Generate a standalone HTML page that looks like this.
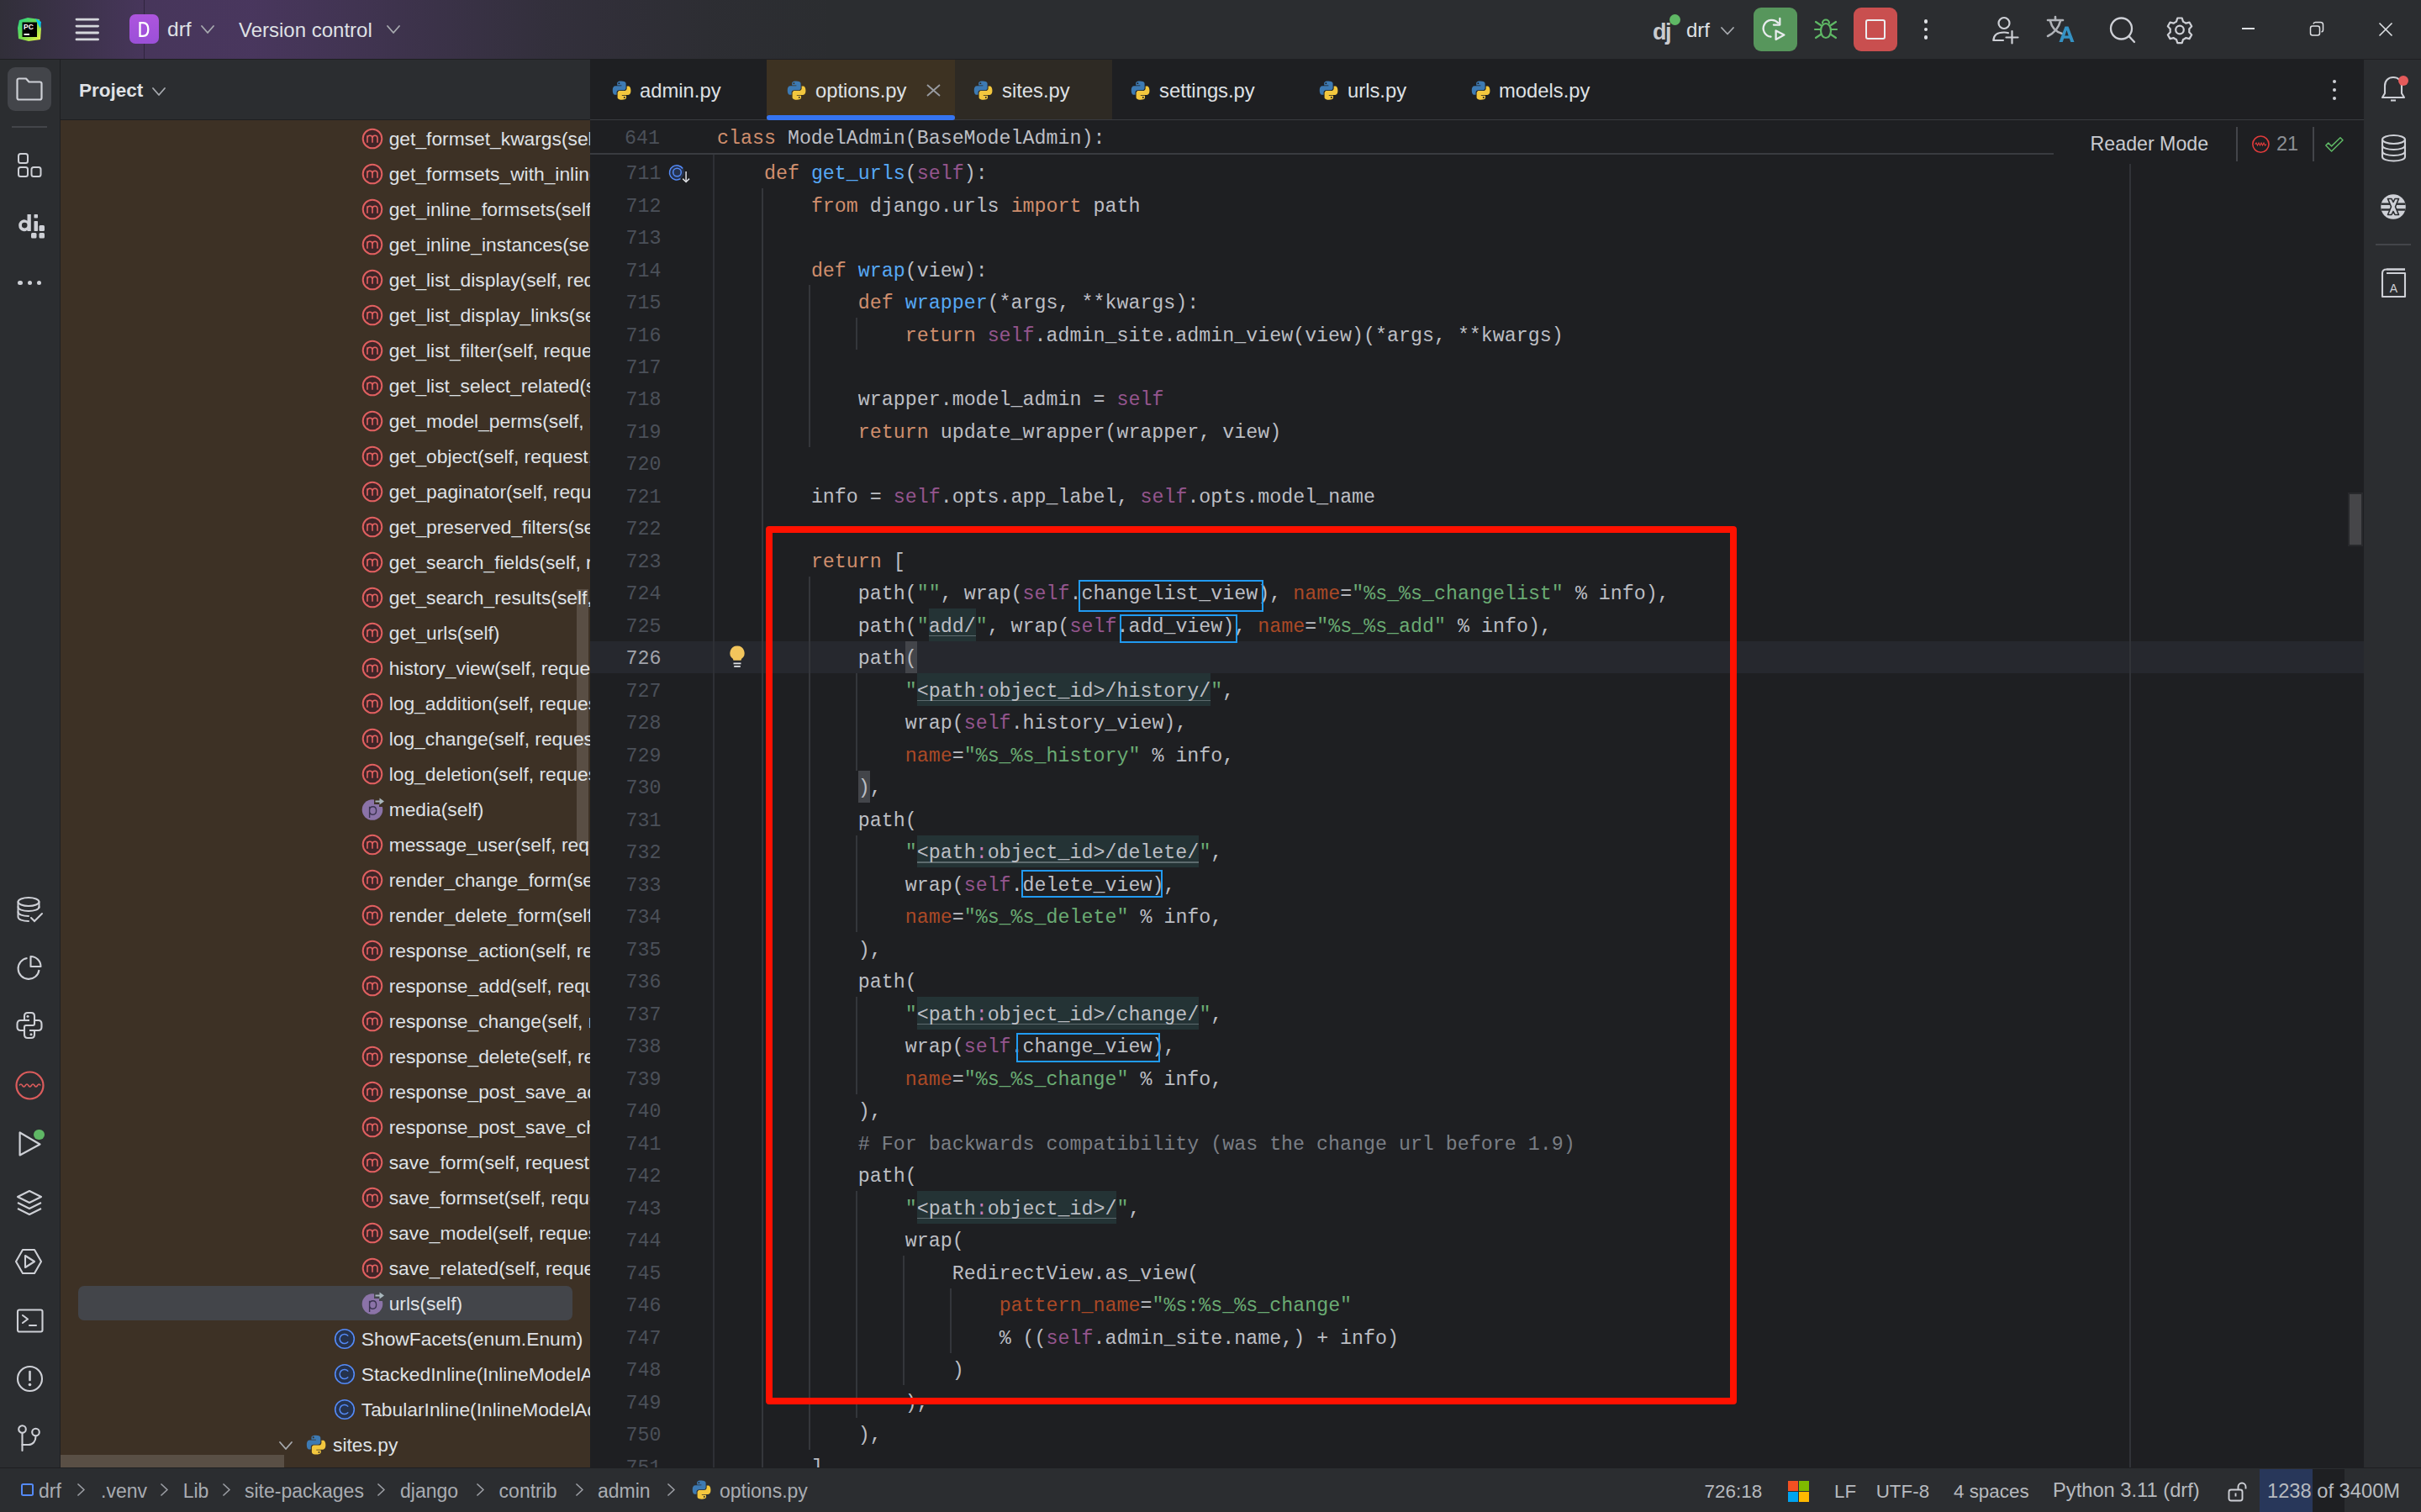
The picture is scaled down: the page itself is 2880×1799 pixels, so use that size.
<!DOCTYPE html><html><head><meta charset="utf-8"><style>html,body{margin:0;padding:0;width:2880px;height:1799px;overflow:hidden;background:#1e1f22;}svg{overflow:visible}</style></head><body><div style="position:absolute;left:0;top:0;width:2880px;height:70px;background:#2b2d30;"></div>
<div style="position:absolute;left:0;top:0;width:1100px;height:70px;background:linear-gradient(90deg, rgba(128,72,178,0.07) 0px, rgba(128,72,178,0.22) 100px, rgba(128,72,178,0.33) 171px, rgba(128,72,178,0.35) 300px, rgba(128,72,178,0.24) 450px, rgba(128,72,178,0.09) 650px, rgba(128,72,178,0.02) 850px, rgba(128,72,178,0) 1000px);"></div>
<div style="position:absolute;left:171px;top:0px;width:1px;height:70px;background:rgba(30,24,40,0.55);"></div>
<div style="position:absolute;left:0px;top:70px;width:2880px;height:1px;background:#1e1f22;"></div>
<div style="position:absolute;left:0px;top:71px;width:71px;height:1676px;background:#2b2d30;"></div>
<div style="position:absolute;left:71px;top:71px;width:1px;height:1676px;background:#1e1f22;"></div>
<div style="position:absolute;left:72px;top:71px;width:630px;height:71px;background:#2b2d30;"></div>
<div style="position:absolute;left:72px;top:142px;width:630px;height:1px;background:#1e1f22;"></div>
<div style="position:absolute;left:72px;top:143px;width:630px;height:1604px;background:#3d3125;"></div>
<div style="position:absolute;left:702px;top:71px;width:2110px;height:1676px;background:#1e1f22;"></div>
<div style="position:absolute;left:2812px;top:71px;width:68px;height:1676px;background:#2b2d30;"></div>
<div style="position:absolute;left:2811px;top:71px;width:1px;height:1676px;background:#1e1f22;"></div>
<div style="position:absolute;left:702px;top:142px;width:2110px;height:2px;background:#393b40;"></div>
<div style="position:absolute;left:702px;top:762.85px;width:2110px;height:38.49px;background:#26282e;"></div>
<div style="position:absolute;left:2533px;top:183px;width:1.5px;height:1563px;background:#313338;"></div>
<div style="position:absolute;left:848px;top:183px;width:2px;height:1563px;background:#2e3035;"></div>
<div style="position:absolute;left:906px;top:223.99px;width:1.5px;height:1539.6000000000001px;background:#34363b;"></div>
<div style="position:absolute;left:962px;top:339.46000000000004px;width:1.5px;height:192.45000000000002px;background:#34363b;"></div>
<div style="position:absolute;left:962px;top:685.87px;width:1.5px;height:1039.23px;background:#34363b;"></div>
<div style="position:absolute;left:1018px;top:377.95000000000005px;width:1.5px;height:38.49px;background:#34363b;"></div>
<div style="position:absolute;left:1018px;top:801.34px;width:1.5px;height:115.47px;background:#34363b;"></div>
<div style="position:absolute;left:1018px;top:993.7900000000001px;width:1.5px;height:115.47px;background:#34363b;"></div>
<div style="position:absolute;left:1018px;top:1186.24px;width:1.5px;height:115.47px;background:#34363b;"></div>
<div style="position:absolute;left:1018px;top:1417.18px;width:1.5px;height:269.43px;background:#34363b;"></div>
<div style="position:absolute;left:1074px;top:1494.16px;width:1.5px;height:153.96px;background:#34363b;"></div>
<div style="position:absolute;left:1130px;top:1532.65px;width:1.5px;height:76.98px;background:#34363b;"></div>
<div style="position:absolute;left:744.545px;top:196.05px;font-family:'Liberation Mono', monospace;font-size:23.3px;line-height:23.3px;color:#4b5059;white-space:pre;">711</div>
<div style="position:absolute;left:744.545px;top:234.54px;font-family:'Liberation Mono', monospace;font-size:23.3px;line-height:23.3px;color:#4b5059;white-space:pre;">712</div>
<div style="position:absolute;left:744.545px;top:273.03px;font-family:'Liberation Mono', monospace;font-size:23.3px;line-height:23.3px;color:#4b5059;white-space:pre;">713</div>
<div style="position:absolute;left:744.545px;top:311.52px;font-family:'Liberation Mono', monospace;font-size:23.3px;line-height:23.3px;color:#4b5059;white-space:pre;">714</div>
<div style="position:absolute;left:744.545px;top:350.01px;font-family:'Liberation Mono', monospace;font-size:23.3px;line-height:23.3px;color:#4b5059;white-space:pre;">715</div>
<div style="position:absolute;left:744.545px;top:388.50px;font-family:'Liberation Mono', monospace;font-size:23.3px;line-height:23.3px;color:#4b5059;white-space:pre;">716</div>
<div style="position:absolute;left:744.545px;top:426.99px;font-family:'Liberation Mono', monospace;font-size:23.3px;line-height:23.3px;color:#4b5059;white-space:pre;">717</div>
<div style="position:absolute;left:744.545px;top:465.48px;font-family:'Liberation Mono', monospace;font-size:23.3px;line-height:23.3px;color:#4b5059;white-space:pre;">718</div>
<div style="position:absolute;left:744.545px;top:503.97px;font-family:'Liberation Mono', monospace;font-size:23.3px;line-height:23.3px;color:#4b5059;white-space:pre;">719</div>
<div style="position:absolute;left:744.545px;top:542.46px;font-family:'Liberation Mono', monospace;font-size:23.3px;line-height:23.3px;color:#4b5059;white-space:pre;">720</div>
<div style="position:absolute;left:744.545px;top:580.95px;font-family:'Liberation Mono', monospace;font-size:23.3px;line-height:23.3px;color:#4b5059;white-space:pre;">721</div>
<div style="position:absolute;left:744.545px;top:619.44px;font-family:'Liberation Mono', monospace;font-size:23.3px;line-height:23.3px;color:#4b5059;white-space:pre;">722</div>
<div style="position:absolute;left:744.545px;top:657.93px;font-family:'Liberation Mono', monospace;font-size:23.3px;line-height:23.3px;color:#4b5059;white-space:pre;">723</div>
<div style="position:absolute;left:744.545px;top:696.42px;font-family:'Liberation Mono', monospace;font-size:23.3px;line-height:23.3px;color:#4b5059;white-space:pre;">724</div>
<div style="position:absolute;left:744.545px;top:734.91px;font-family:'Liberation Mono', monospace;font-size:23.3px;line-height:23.3px;color:#4b5059;white-space:pre;">725</div>
<div style="position:absolute;left:744.545px;top:773.40px;font-family:'Liberation Mono', monospace;font-size:23.3px;line-height:23.3px;color:#a1a3ab;white-space:pre;">726</div>
<div style="position:absolute;left:744.545px;top:811.89px;font-family:'Liberation Mono', monospace;font-size:23.3px;line-height:23.3px;color:#4b5059;white-space:pre;">727</div>
<div style="position:absolute;left:744.545px;top:850.38px;font-family:'Liberation Mono', monospace;font-size:23.3px;line-height:23.3px;color:#4b5059;white-space:pre;">728</div>
<div style="position:absolute;left:744.545px;top:888.87px;font-family:'Liberation Mono', monospace;font-size:23.3px;line-height:23.3px;color:#4b5059;white-space:pre;">729</div>
<div style="position:absolute;left:744.545px;top:927.36px;font-family:'Liberation Mono', monospace;font-size:23.3px;line-height:23.3px;color:#4b5059;white-space:pre;">730</div>
<div style="position:absolute;left:744.545px;top:965.85px;font-family:'Liberation Mono', monospace;font-size:23.3px;line-height:23.3px;color:#4b5059;white-space:pre;">731</div>
<div style="position:absolute;left:744.545px;top:1004.34px;font-family:'Liberation Mono', monospace;font-size:23.3px;line-height:23.3px;color:#4b5059;white-space:pre;">732</div>
<div style="position:absolute;left:744.545px;top:1042.83px;font-family:'Liberation Mono', monospace;font-size:23.3px;line-height:23.3px;color:#4b5059;white-space:pre;">733</div>
<div style="position:absolute;left:744.545px;top:1081.32px;font-family:'Liberation Mono', monospace;font-size:23.3px;line-height:23.3px;color:#4b5059;white-space:pre;">734</div>
<div style="position:absolute;left:744.545px;top:1119.81px;font-family:'Liberation Mono', monospace;font-size:23.3px;line-height:23.3px;color:#4b5059;white-space:pre;">735</div>
<div style="position:absolute;left:744.545px;top:1158.30px;font-family:'Liberation Mono', monospace;font-size:23.3px;line-height:23.3px;color:#4b5059;white-space:pre;">736</div>
<div style="position:absolute;left:744.545px;top:1196.79px;font-family:'Liberation Mono', monospace;font-size:23.3px;line-height:23.3px;color:#4b5059;white-space:pre;">737</div>
<div style="position:absolute;left:744.545px;top:1235.28px;font-family:'Liberation Mono', monospace;font-size:23.3px;line-height:23.3px;color:#4b5059;white-space:pre;">738</div>
<div style="position:absolute;left:744.545px;top:1273.77px;font-family:'Liberation Mono', monospace;font-size:23.3px;line-height:23.3px;color:#4b5059;white-space:pre;">739</div>
<div style="position:absolute;left:744.545px;top:1312.26px;font-family:'Liberation Mono', monospace;font-size:23.3px;line-height:23.3px;color:#4b5059;white-space:pre;">740</div>
<div style="position:absolute;left:744.545px;top:1350.75px;font-family:'Liberation Mono', monospace;font-size:23.3px;line-height:23.3px;color:#4b5059;white-space:pre;">741</div>
<div style="position:absolute;left:744.545px;top:1389.24px;font-family:'Liberation Mono', monospace;font-size:23.3px;line-height:23.3px;color:#4b5059;white-space:pre;">742</div>
<div style="position:absolute;left:744.545px;top:1427.73px;font-family:'Liberation Mono', monospace;font-size:23.3px;line-height:23.3px;color:#4b5059;white-space:pre;">743</div>
<div style="position:absolute;left:744.545px;top:1466.22px;font-family:'Liberation Mono', monospace;font-size:23.3px;line-height:23.3px;color:#4b5059;white-space:pre;">744</div>
<div style="position:absolute;left:744.545px;top:1504.71px;font-family:'Liberation Mono', monospace;font-size:23.3px;line-height:23.3px;color:#4b5059;white-space:pre;">745</div>
<div style="position:absolute;left:744.545px;top:1543.20px;font-family:'Liberation Mono', monospace;font-size:23.3px;line-height:23.3px;color:#4b5059;white-space:pre;">746</div>
<div style="position:absolute;left:744.545px;top:1581.69px;font-family:'Liberation Mono', monospace;font-size:23.3px;line-height:23.3px;color:#4b5059;white-space:pre;">747</div>
<div style="position:absolute;left:744.545px;top:1620.18px;font-family:'Liberation Mono', monospace;font-size:23.3px;line-height:23.3px;color:#4b5059;white-space:pre;">748</div>
<div style="position:absolute;left:744.545px;top:1658.67px;font-family:'Liberation Mono', monospace;font-size:23.3px;line-height:23.3px;color:#4b5059;white-space:pre;">749</div>
<div style="position:absolute;left:744.545px;top:1697.16px;font-family:'Liberation Mono', monospace;font-size:23.3px;line-height:23.3px;color:#4b5059;white-space:pre;">750</div>
<div style="position:absolute;left:744.545px;top:1735.65px;font-family:'Liberation Mono', monospace;font-size:23.3px;line-height:23.3px;color:#4b5059;white-space:pre;">751</div>
<div style="position:absolute;left:908.94px;top:196.05px;font-family:'Liberation Mono', monospace;font-size:23.3px;line-height:23.3px;color:#cf8e6d;white-space:pre;">def</div>
<div style="position:absolute;left:950.8950000000001px;top:196.05px;font-family:'Liberation Mono', monospace;font-size:23.3px;line-height:23.3px;color:#bcbec4;white-space:pre;"> </div>
<div style="position:absolute;left:964.8800000000001px;top:196.05px;font-family:'Liberation Mono', monospace;font-size:23.3px;line-height:23.3px;color:#56a8f5;white-space:pre;">get_urls</div>
<div style="position:absolute;left:1076.7600000000002px;top:196.05px;font-family:'Liberation Mono', monospace;font-size:23.3px;line-height:23.3px;color:#bcbec4;white-space:pre;">(</div>
<div style="position:absolute;left:1090.7450000000001px;top:196.05px;font-family:'Liberation Mono', monospace;font-size:23.3px;line-height:23.3px;color:#94558d;white-space:pre;">self</div>
<div style="position:absolute;left:1146.6850000000002px;top:196.05px;font-family:'Liberation Mono', monospace;font-size:23.3px;line-height:23.3px;color:#bcbec4;white-space:pre;">):</div>
<div style="position:absolute;left:964.88px;top:234.54px;font-family:'Liberation Mono', monospace;font-size:23.3px;line-height:23.3px;color:#cf8e6d;white-space:pre;">from</div>
<div style="position:absolute;left:1020.8199999999999px;top:234.54px;font-family:'Liberation Mono', monospace;font-size:23.3px;line-height:23.3px;color:#bcbec4;white-space:pre;"> django.urls </div>
<div style="position:absolute;left:1202.625px;top:234.54px;font-family:'Liberation Mono', monospace;font-size:23.3px;line-height:23.3px;color:#cf8e6d;white-space:pre;">import</div>
<div style="position:absolute;left:1286.535px;top:234.54px;font-family:'Liberation Mono', monospace;font-size:23.3px;line-height:23.3px;color:#bcbec4;white-space:pre;"> path</div>
<div style="position:absolute;left:964.88px;top:311.52px;font-family:'Liberation Mono', monospace;font-size:23.3px;line-height:23.3px;color:#cf8e6d;white-space:pre;">def</div>
<div style="position:absolute;left:1006.835px;top:311.52px;font-family:'Liberation Mono', monospace;font-size:23.3px;line-height:23.3px;color:#bcbec4;white-space:pre;"> </div>
<div style="position:absolute;left:1020.82px;top:311.52px;font-family:'Liberation Mono', monospace;font-size:23.3px;line-height:23.3px;color:#56a8f5;white-space:pre;">wrap</div>
<div style="position:absolute;left:1076.76px;top:311.52px;font-family:'Liberation Mono', monospace;font-size:23.3px;line-height:23.3px;color:#bcbec4;white-space:pre;">(view):</div>
<div style="position:absolute;left:1020.8199999999999px;top:350.01px;font-family:'Liberation Mono', monospace;font-size:23.3px;line-height:23.3px;color:#cf8e6d;white-space:pre;">def</div>
<div style="position:absolute;left:1062.7749999999999px;top:350.01px;font-family:'Liberation Mono', monospace;font-size:23.3px;line-height:23.3px;color:#bcbec4;white-space:pre;"> </div>
<div style="position:absolute;left:1076.7599999999998px;top:350.01px;font-family:'Liberation Mono', monospace;font-size:23.3px;line-height:23.3px;color:#56a8f5;white-space:pre;">wrapper</div>
<div style="position:absolute;left:1174.6549999999997px;top:350.01px;font-family:'Liberation Mono', monospace;font-size:23.3px;line-height:23.3px;color:#bcbec4;white-space:pre;">(*args, **kwargs):</div>
<div style="position:absolute;left:1076.76px;top:388.50px;font-family:'Liberation Mono', monospace;font-size:23.3px;line-height:23.3px;color:#cf8e6d;white-space:pre;">return</div>
<div style="position:absolute;left:1160.67px;top:388.50px;font-family:'Liberation Mono', monospace;font-size:23.3px;line-height:23.3px;color:#bcbec4;white-space:pre;"> </div>
<div style="position:absolute;left:1174.655px;top:388.50px;font-family:'Liberation Mono', monospace;font-size:23.3px;line-height:23.3px;color:#94558d;white-space:pre;">self</div>
<div style="position:absolute;left:1230.595px;top:388.50px;font-family:'Liberation Mono', monospace;font-size:23.3px;line-height:23.3px;color:#bcbec4;white-space:pre;">.admin_site.admin_view(view)(*args, **kwargs)</div>
<div style="position:absolute;left:1020.8199999999999px;top:465.48px;font-family:'Liberation Mono', monospace;font-size:23.3px;line-height:23.3px;color:#bcbec4;white-space:pre;">wrapper.model_admin = </div>
<div style="position:absolute;left:1328.4899999999998px;top:465.48px;font-family:'Liberation Mono', monospace;font-size:23.3px;line-height:23.3px;color:#94558d;white-space:pre;">self</div>
<div style="position:absolute;left:1020.8199999999999px;top:503.97px;font-family:'Liberation Mono', monospace;font-size:23.3px;line-height:23.3px;color:#cf8e6d;white-space:pre;">return</div>
<div style="position:absolute;left:1104.73px;top:503.97px;font-family:'Liberation Mono', monospace;font-size:23.3px;line-height:23.3px;color:#bcbec4;white-space:pre;"> update_wrapper(wrapper, view)</div>
<div style="position:absolute;left:964.88px;top:580.95px;font-family:'Liberation Mono', monospace;font-size:23.3px;line-height:23.3px;color:#bcbec4;white-space:pre;">info = </div>
<div style="position:absolute;left:1062.775px;top:580.95px;font-family:'Liberation Mono', monospace;font-size:23.3px;line-height:23.3px;color:#94558d;white-space:pre;">self</div>
<div style="position:absolute;left:1118.7150000000001px;top:580.95px;font-family:'Liberation Mono', monospace;font-size:23.3px;line-height:23.3px;color:#bcbec4;white-space:pre;">.opts.app_label, </div>
<div style="position:absolute;left:1356.46px;top:580.95px;font-family:'Liberation Mono', monospace;font-size:23.3px;line-height:23.3px;color:#94558d;white-space:pre;">self</div>
<div style="position:absolute;left:1412.4px;top:580.95px;font-family:'Liberation Mono', monospace;font-size:23.3px;line-height:23.3px;color:#bcbec4;white-space:pre;">.opts.model_name</div>
<div style="position:absolute;left:964.88px;top:657.93px;font-family:'Liberation Mono', monospace;font-size:23.3px;line-height:23.3px;color:#cf8e6d;white-space:pre;">return</div>
<div style="position:absolute;left:1048.79px;top:657.93px;font-family:'Liberation Mono', monospace;font-size:23.3px;line-height:23.3px;color:#bcbec4;white-space:pre;"> [</div>
<div style="position:absolute;left:1020.8199999999999px;top:696.42px;font-family:'Liberation Mono', monospace;font-size:23.3px;line-height:23.3px;color:#bcbec4;white-space:pre;">path(</div>
<div style="position:absolute;left:1090.745px;top:696.42px;font-family:'Liberation Mono', monospace;font-size:23.3px;line-height:23.3px;color:#6aab73;white-space:pre;">&quot;&quot;</div>
<div style="position:absolute;left:1118.715px;top:696.42px;font-family:'Liberation Mono', monospace;font-size:23.3px;line-height:23.3px;color:#bcbec4;white-space:pre;">, wrap(</div>
<div style="position:absolute;left:1216.61px;top:696.42px;font-family:'Liberation Mono', monospace;font-size:23.3px;line-height:23.3px;color:#94558d;white-space:pre;">self</div>
<div style="position:absolute;left:1272.55px;top:696.42px;font-family:'Liberation Mono', monospace;font-size:23.3px;line-height:23.3px;color:#bcbec4;white-space:pre;">.changelist_view), </div>
<div style="position:absolute;left:1538.2649999999999px;top:696.42px;font-family:'Liberation Mono', monospace;font-size:23.3px;line-height:23.3px;color:#aa4926;white-space:pre;">name</div>
<div style="position:absolute;left:1594.205px;top:696.42px;font-family:'Liberation Mono', monospace;font-size:23.3px;line-height:23.3px;color:#bcbec4;white-space:pre;">=</div>
<div style="position:absolute;left:1608.1899999999998px;top:696.42px;font-family:'Liberation Mono', monospace;font-size:23.3px;line-height:23.3px;color:#6aab73;white-space:pre;">&quot;%s_%s_changelist&quot;</div>
<div style="position:absolute;left:1859.9199999999998px;top:696.42px;font-family:'Liberation Mono', monospace;font-size:23.3px;line-height:23.3px;color:#bcbec4;white-space:pre;"> % info),</div>
<div style="position:absolute;left:1020.8199999999999px;top:734.91px;font-family:'Liberation Mono', monospace;font-size:23.3px;line-height:23.3px;color:#bcbec4;white-space:pre;">path(</div>
<div style="position:absolute;left:1090.745px;top:734.91px;font-family:'Liberation Mono', monospace;font-size:23.3px;line-height:23.3px;color:#6aab73;white-space:pre;">&quot;</div>
<div style="position:absolute;left:1104.7299999999998px;top:724.36px;width:55.94px;height:38.49px;background:#243335;"></div>
<div style="position:absolute;left:1104.7299999999998px;top:755.76px;width:55.94px;height:1.5px;background:#5d6b6e;"></div>
<div style="position:absolute;left:1104.7299999999998px;top:734.91px;font-family:'Liberation Mono', monospace;font-size:23.3px;line-height:23.3px;color:#bcbec4;white-space:pre;">add/</div>
<div style="position:absolute;left:1160.6699999999998px;top:734.91px;font-family:'Liberation Mono', monospace;font-size:23.3px;line-height:23.3px;color:#6aab73;white-space:pre;">&quot;</div>
<div style="position:absolute;left:1174.6549999999997px;top:734.91px;font-family:'Liberation Mono', monospace;font-size:23.3px;line-height:23.3px;color:#bcbec4;white-space:pre;">, wrap(</div>
<div style="position:absolute;left:1272.5499999999997px;top:734.91px;font-family:'Liberation Mono', monospace;font-size:23.3px;line-height:23.3px;color:#94558d;white-space:pre;">self</div>
<div style="position:absolute;left:1328.4899999999998px;top:734.91px;font-family:'Liberation Mono', monospace;font-size:23.3px;line-height:23.3px;color:#bcbec4;white-space:pre;">.add_view), </div>
<div style="position:absolute;left:1496.3099999999997px;top:734.91px;font-family:'Liberation Mono', monospace;font-size:23.3px;line-height:23.3px;color:#aa4926;white-space:pre;">name</div>
<div style="position:absolute;left:1552.2499999999998px;top:734.91px;font-family:'Liberation Mono', monospace;font-size:23.3px;line-height:23.3px;color:#bcbec4;white-space:pre;">=</div>
<div style="position:absolute;left:1566.2349999999997px;top:734.91px;font-family:'Liberation Mono', monospace;font-size:23.3px;line-height:23.3px;color:#6aab73;white-space:pre;">&quot;%s_%s_add&quot;</div>
<div style="position:absolute;left:1720.0699999999997px;top:734.91px;font-family:'Liberation Mono', monospace;font-size:23.3px;line-height:23.3px;color:#bcbec4;white-space:pre;"> % info),</div>
<div style="position:absolute;left:1020.8199999999999px;top:773.40px;font-family:'Liberation Mono', monospace;font-size:23.3px;line-height:23.3px;color:#bcbec4;white-space:pre;">path</div>
<div style="position:absolute;left:1076.76px;top:762.85px;width:13.985px;height:38.49px;background:#43454a;"></div>
<div style="position:absolute;left:1076.76px;top:773.40px;font-family:'Liberation Mono', monospace;font-size:23.3px;line-height:23.3px;color:#bcbec4;white-space:pre;">(</div>
<div style="position:absolute;left:1076.76px;top:811.89px;font-family:'Liberation Mono', monospace;font-size:23.3px;line-height:23.3px;color:#6aab73;white-space:pre;">&quot;</div>
<div style="position:absolute;left:1090.745px;top:801.34px;width:69.925px;height:38.49px;background:#243335;"></div>
<div style="position:absolute;left:1090.745px;top:832.74px;width:69.925px;height:1.5px;background:#5d6b6e;"></div>
<div style="position:absolute;left:1090.745px;top:811.89px;font-family:'Liberation Mono', monospace;font-size:23.3px;line-height:23.3px;color:#bcbec4;white-space:pre;">&lt;path</div>
<div style="position:absolute;left:1160.6699999999998px;top:801.34px;width:13.985px;height:38.49px;background:#243335;"></div>
<div style="position:absolute;left:1160.6699999999998px;top:832.74px;width:13.985px;height:1.5px;background:#5d6b6e;"></div>
<div style="position:absolute;left:1160.6699999999998px;top:811.89px;font-family:'Liberation Mono', monospace;font-size:23.3px;line-height:23.3px;color:#c77dbb;white-space:pre;">:</div>
<div style="position:absolute;left:1174.6549999999997px;top:801.34px;width:265.715px;height:38.49px;background:#243335;"></div>
<div style="position:absolute;left:1174.6549999999997px;top:832.74px;width:265.715px;height:1.5px;background:#5d6b6e;"></div>
<div style="position:absolute;left:1174.6549999999997px;top:811.89px;font-family:'Liberation Mono', monospace;font-size:23.3px;line-height:23.3px;color:#bcbec4;white-space:pre;">object_id&gt;/history/</div>
<div style="position:absolute;left:1440.3699999999997px;top:811.89px;font-family:'Liberation Mono', monospace;font-size:23.3px;line-height:23.3px;color:#6aab73;white-space:pre;">&quot;</div>
<div style="position:absolute;left:1454.3549999999996px;top:811.89px;font-family:'Liberation Mono', monospace;font-size:23.3px;line-height:23.3px;color:#bcbec4;white-space:pre;">,</div>
<div style="position:absolute;left:1076.76px;top:850.38px;font-family:'Liberation Mono', monospace;font-size:23.3px;line-height:23.3px;color:#bcbec4;white-space:pre;">wrap(</div>
<div style="position:absolute;left:1146.685px;top:850.38px;font-family:'Liberation Mono', monospace;font-size:23.3px;line-height:23.3px;color:#94558d;white-space:pre;">self</div>
<div style="position:absolute;left:1202.625px;top:850.38px;font-family:'Liberation Mono', monospace;font-size:23.3px;line-height:23.3px;color:#bcbec4;white-space:pre;">.history_view),</div>
<div style="position:absolute;left:1076.76px;top:888.87px;font-family:'Liberation Mono', monospace;font-size:23.3px;line-height:23.3px;color:#aa4926;white-space:pre;">name</div>
<div style="position:absolute;left:1132.7px;top:888.87px;font-family:'Liberation Mono', monospace;font-size:23.3px;line-height:23.3px;color:#bcbec4;white-space:pre;">=</div>
<div style="position:absolute;left:1146.685px;top:888.87px;font-family:'Liberation Mono', monospace;font-size:23.3px;line-height:23.3px;color:#6aab73;white-space:pre;">&quot;%s_%s_history&quot;</div>
<div style="position:absolute;left:1356.46px;top:888.87px;font-family:'Liberation Mono', monospace;font-size:23.3px;line-height:23.3px;color:#bcbec4;white-space:pre;"> % info,</div>
<div style="position:absolute;left:1020.8199999999999px;top:916.8100000000001px;width:13.985px;height:38.49px;background:#43454a;"></div>
<div style="position:absolute;left:1020.8199999999999px;top:927.36px;font-family:'Liberation Mono', monospace;font-size:23.3px;line-height:23.3px;color:#bcbec4;white-space:pre;">)</div>
<div style="position:absolute;left:1034.8049999999998px;top:927.36px;font-family:'Liberation Mono', monospace;font-size:23.3px;line-height:23.3px;color:#bcbec4;white-space:pre;">,</div>
<div style="position:absolute;left:1020.8199999999999px;top:965.85px;font-family:'Liberation Mono', monospace;font-size:23.3px;line-height:23.3px;color:#bcbec4;white-space:pre;">path(</div>
<div style="position:absolute;left:1076.76px;top:1004.34px;font-family:'Liberation Mono', monospace;font-size:23.3px;line-height:23.3px;color:#6aab73;white-space:pre;">&quot;</div>
<div style="position:absolute;left:1090.745px;top:993.7900000000001px;width:69.925px;height:38.49px;background:#243335;"></div>
<div style="position:absolute;left:1090.745px;top:1025.19px;width:69.925px;height:1.5px;background:#5d6b6e;"></div>
<div style="position:absolute;left:1090.745px;top:1004.34px;font-family:'Liberation Mono', monospace;font-size:23.3px;line-height:23.3px;color:#bcbec4;white-space:pre;">&lt;path</div>
<div style="position:absolute;left:1160.6699999999998px;top:993.7900000000001px;width:13.985px;height:38.49px;background:#243335;"></div>
<div style="position:absolute;left:1160.6699999999998px;top:1025.19px;width:13.985px;height:1.5px;background:#5d6b6e;"></div>
<div style="position:absolute;left:1160.6699999999998px;top:1004.34px;font-family:'Liberation Mono', monospace;font-size:23.3px;line-height:23.3px;color:#c77dbb;white-space:pre;">:</div>
<div style="position:absolute;left:1174.6549999999997px;top:993.7900000000001px;width:251.73px;height:38.49px;background:#243335;"></div>
<div style="position:absolute;left:1174.6549999999997px;top:1025.19px;width:251.73px;height:1.5px;background:#5d6b6e;"></div>
<div style="position:absolute;left:1174.6549999999997px;top:1004.34px;font-family:'Liberation Mono', monospace;font-size:23.3px;line-height:23.3px;color:#bcbec4;white-space:pre;">object_id&gt;/delete/</div>
<div style="position:absolute;left:1426.3849999999998px;top:1004.34px;font-family:'Liberation Mono', monospace;font-size:23.3px;line-height:23.3px;color:#6aab73;white-space:pre;">&quot;</div>
<div style="position:absolute;left:1440.3699999999997px;top:1004.34px;font-family:'Liberation Mono', monospace;font-size:23.3px;line-height:23.3px;color:#bcbec4;white-space:pre;">,</div>
<div style="position:absolute;left:1076.76px;top:1042.83px;font-family:'Liberation Mono', monospace;font-size:23.3px;line-height:23.3px;color:#bcbec4;white-space:pre;">wrap(</div>
<div style="position:absolute;left:1146.685px;top:1042.83px;font-family:'Liberation Mono', monospace;font-size:23.3px;line-height:23.3px;color:#94558d;white-space:pre;">self</div>
<div style="position:absolute;left:1202.625px;top:1042.83px;font-family:'Liberation Mono', monospace;font-size:23.3px;line-height:23.3px;color:#bcbec4;white-space:pre;">.delete_view),</div>
<div style="position:absolute;left:1076.76px;top:1081.32px;font-family:'Liberation Mono', monospace;font-size:23.3px;line-height:23.3px;color:#aa4926;white-space:pre;">name</div>
<div style="position:absolute;left:1132.7px;top:1081.32px;font-family:'Liberation Mono', monospace;font-size:23.3px;line-height:23.3px;color:#bcbec4;white-space:pre;">=</div>
<div style="position:absolute;left:1146.685px;top:1081.32px;font-family:'Liberation Mono', monospace;font-size:23.3px;line-height:23.3px;color:#6aab73;white-space:pre;">&quot;%s_%s_delete&quot;</div>
<div style="position:absolute;left:1342.475px;top:1081.32px;font-family:'Liberation Mono', monospace;font-size:23.3px;line-height:23.3px;color:#bcbec4;white-space:pre;"> % info,</div>
<div style="position:absolute;left:1020.8199999999999px;top:1119.81px;font-family:'Liberation Mono', monospace;font-size:23.3px;line-height:23.3px;color:#bcbec4;white-space:pre;">),</div>
<div style="position:absolute;left:1020.8199999999999px;top:1158.30px;font-family:'Liberation Mono', monospace;font-size:23.3px;line-height:23.3px;color:#bcbec4;white-space:pre;">path(</div>
<div style="position:absolute;left:1076.76px;top:1196.79px;font-family:'Liberation Mono', monospace;font-size:23.3px;line-height:23.3px;color:#6aab73;white-space:pre;">&quot;</div>
<div style="position:absolute;left:1090.745px;top:1186.24px;width:69.925px;height:38.49px;background:#243335;"></div>
<div style="position:absolute;left:1090.745px;top:1217.64px;width:69.925px;height:1.5px;background:#5d6b6e;"></div>
<div style="position:absolute;left:1090.745px;top:1196.79px;font-family:'Liberation Mono', monospace;font-size:23.3px;line-height:23.3px;color:#bcbec4;white-space:pre;">&lt;path</div>
<div style="position:absolute;left:1160.6699999999998px;top:1186.24px;width:13.985px;height:38.49px;background:#243335;"></div>
<div style="position:absolute;left:1160.6699999999998px;top:1217.64px;width:13.985px;height:1.5px;background:#5d6b6e;"></div>
<div style="position:absolute;left:1160.6699999999998px;top:1196.79px;font-family:'Liberation Mono', monospace;font-size:23.3px;line-height:23.3px;color:#c77dbb;white-space:pre;">:</div>
<div style="position:absolute;left:1174.6549999999997px;top:1186.24px;width:251.73px;height:38.49px;background:#243335;"></div>
<div style="position:absolute;left:1174.6549999999997px;top:1217.64px;width:251.73px;height:1.5px;background:#5d6b6e;"></div>
<div style="position:absolute;left:1174.6549999999997px;top:1196.79px;font-family:'Liberation Mono', monospace;font-size:23.3px;line-height:23.3px;color:#bcbec4;white-space:pre;">object_id&gt;/change/</div>
<div style="position:absolute;left:1426.3849999999998px;top:1196.79px;font-family:'Liberation Mono', monospace;font-size:23.3px;line-height:23.3px;color:#6aab73;white-space:pre;">&quot;</div>
<div style="position:absolute;left:1440.3699999999997px;top:1196.79px;font-family:'Liberation Mono', monospace;font-size:23.3px;line-height:23.3px;color:#bcbec4;white-space:pre;">,</div>
<div style="position:absolute;left:1076.76px;top:1235.28px;font-family:'Liberation Mono', monospace;font-size:23.3px;line-height:23.3px;color:#bcbec4;white-space:pre;">wrap(</div>
<div style="position:absolute;left:1146.685px;top:1235.28px;font-family:'Liberation Mono', monospace;font-size:23.3px;line-height:23.3px;color:#94558d;white-space:pre;">self</div>
<div style="position:absolute;left:1202.625px;top:1235.28px;font-family:'Liberation Mono', monospace;font-size:23.3px;line-height:23.3px;color:#bcbec4;white-space:pre;">.change_view),</div>
<div style="position:absolute;left:1076.76px;top:1273.77px;font-family:'Liberation Mono', monospace;font-size:23.3px;line-height:23.3px;color:#aa4926;white-space:pre;">name</div>
<div style="position:absolute;left:1132.7px;top:1273.77px;font-family:'Liberation Mono', monospace;font-size:23.3px;line-height:23.3px;color:#bcbec4;white-space:pre;">=</div>
<div style="position:absolute;left:1146.685px;top:1273.77px;font-family:'Liberation Mono', monospace;font-size:23.3px;line-height:23.3px;color:#6aab73;white-space:pre;">&quot;%s_%s_change&quot;</div>
<div style="position:absolute;left:1342.475px;top:1273.77px;font-family:'Liberation Mono', monospace;font-size:23.3px;line-height:23.3px;color:#bcbec4;white-space:pre;"> % info,</div>
<div style="position:absolute;left:1020.8199999999999px;top:1312.26px;font-family:'Liberation Mono', monospace;font-size:23.3px;line-height:23.3px;color:#bcbec4;white-space:pre;">),</div>
<div style="position:absolute;left:1020.8199999999999px;top:1350.75px;font-family:'Liberation Mono', monospace;font-size:23.3px;line-height:23.3px;color:#7a7e85;white-space:pre;"># For backwards compatibility (was the change url before 1.9)</div>
<div style="position:absolute;left:1020.8199999999999px;top:1389.24px;font-family:'Liberation Mono', monospace;font-size:23.3px;line-height:23.3px;color:#bcbec4;white-space:pre;">path(</div>
<div style="position:absolute;left:1076.76px;top:1427.73px;font-family:'Liberation Mono', monospace;font-size:23.3px;line-height:23.3px;color:#6aab73;white-space:pre;">&quot;</div>
<div style="position:absolute;left:1090.745px;top:1417.18px;width:69.925px;height:38.49px;background:#243335;"></div>
<div style="position:absolute;left:1090.745px;top:1448.5800000000002px;width:69.925px;height:1.5px;background:#5d6b6e;"></div>
<div style="position:absolute;left:1090.745px;top:1427.73px;font-family:'Liberation Mono', monospace;font-size:23.3px;line-height:23.3px;color:#bcbec4;white-space:pre;">&lt;path</div>
<div style="position:absolute;left:1160.6699999999998px;top:1417.18px;width:13.985px;height:38.49px;background:#243335;"></div>
<div style="position:absolute;left:1160.6699999999998px;top:1448.5800000000002px;width:13.985px;height:1.5px;background:#5d6b6e;"></div>
<div style="position:absolute;left:1160.6699999999998px;top:1427.73px;font-family:'Liberation Mono', monospace;font-size:23.3px;line-height:23.3px;color:#c77dbb;white-space:pre;">:</div>
<div style="position:absolute;left:1174.6549999999997px;top:1417.18px;width:153.83499999999998px;height:38.49px;background:#243335;"></div>
<div style="position:absolute;left:1174.6549999999997px;top:1448.5800000000002px;width:153.83499999999998px;height:1.5px;background:#5d6b6e;"></div>
<div style="position:absolute;left:1174.6549999999997px;top:1427.73px;font-family:'Liberation Mono', monospace;font-size:23.3px;line-height:23.3px;color:#bcbec4;white-space:pre;">object_id&gt;/</div>
<div style="position:absolute;left:1328.4899999999998px;top:1427.73px;font-family:'Liberation Mono', monospace;font-size:23.3px;line-height:23.3px;color:#6aab73;white-space:pre;">&quot;</div>
<div style="position:absolute;left:1342.4749999999997px;top:1427.73px;font-family:'Liberation Mono', monospace;font-size:23.3px;line-height:23.3px;color:#bcbec4;white-space:pre;">,</div>
<div style="position:absolute;left:1076.76px;top:1466.22px;font-family:'Liberation Mono', monospace;font-size:23.3px;line-height:23.3px;color:#bcbec4;white-space:pre;">wrap(</div>
<div style="position:absolute;left:1132.7px;top:1504.71px;font-family:'Liberation Mono', monospace;font-size:23.3px;line-height:23.3px;color:#bcbec4;white-space:pre;">RedirectView.as_view(</div>
<div style="position:absolute;left:1188.6399999999999px;top:1543.20px;font-family:'Liberation Mono', monospace;font-size:23.3px;line-height:23.3px;color:#aa4926;white-space:pre;">pattern_name</div>
<div style="position:absolute;left:1356.4599999999998px;top:1543.20px;font-family:'Liberation Mono', monospace;font-size:23.3px;line-height:23.3px;color:#bcbec4;white-space:pre;">=</div>
<div style="position:absolute;left:1370.4449999999997px;top:1543.20px;font-family:'Liberation Mono', monospace;font-size:23.3px;line-height:23.3px;color:#6aab73;white-space:pre;">&quot;%s:%s_%s_change&quot;</div>
<div style="position:absolute;left:1188.6399999999999px;top:1581.69px;font-family:'Liberation Mono', monospace;font-size:23.3px;line-height:23.3px;color:#bcbec4;white-space:pre;">% ((</div>
<div style="position:absolute;left:1244.58px;top:1581.69px;font-family:'Liberation Mono', monospace;font-size:23.3px;line-height:23.3px;color:#94558d;white-space:pre;">self</div>
<div style="position:absolute;left:1300.52px;top:1581.69px;font-family:'Liberation Mono', monospace;font-size:23.3px;line-height:23.3px;color:#bcbec4;white-space:pre;">.admin_site.name,) + info)</div>
<div style="position:absolute;left:1132.7px;top:1620.18px;font-family:'Liberation Mono', monospace;font-size:23.3px;line-height:23.3px;color:#bcbec4;white-space:pre;">)</div>
<div style="position:absolute;left:1076.76px;top:1658.67px;font-family:'Liberation Mono', monospace;font-size:23.3px;line-height:23.3px;color:#bcbec4;white-space:pre;">),</div>
<div style="position:absolute;left:1020.8199999999999px;top:1697.16px;font-family:'Liberation Mono', monospace;font-size:23.3px;line-height:23.3px;color:#bcbec4;white-space:pre;">),</div>
<div style="position:absolute;left:964.88px;top:1735.65px;font-family:'Liberation Mono', monospace;font-size:23.3px;line-height:23.3px;color:#bcbec4;white-space:pre;">]</div>
<div style="position:absolute;left:702px;top:143px;width:2110px;height:40px;background:#1e1f22;"></div>
<div style="position:absolute;left:702px;top:182px;width:1741px;height:1.5px;background:#393b40;"></div>
<div style="position:absolute;left:743.045px;top:154.35px;font-family:'Liberation Mono', monospace;font-size:23.3px;line-height:23.3px;color:#4b5059;white-space:pre;">641</div>
<div style="position:absolute;left:853.0px;top:154.35px;font-family:'Liberation Mono', monospace;font-size:23.3px;line-height:23.3px;color:#cf8e6d;white-space:pre;">class</div>
<div style="position:absolute;left:936.91px;top:154.35px;font-family:'Liberation Mono', monospace;font-size:23.3px;line-height:23.3px;color:#bcbec4;white-space:pre;">ModelAdmin(BaseModelAdmin):</div>
<div style="position:absolute;left:1283px;top:690px;width:216px;height:34px;border:2px solid #219bf2;border-radius:0px;"></div>
<div style="position:absolute;left:1332px;top:731px;width:136px;height:30px;border:2px solid #219bf2;border-radius:0px;"></div>
<div style="position:absolute;left:1215px;top:1035px;width:164px;height:29px;border:2px solid #219bf2;border-radius:0px;"></div>
<div style="position:absolute;left:1209px;top:1229px;width:167px;height:31px;border:2px solid #219bf2;border-radius:0px;"></div>
<div style="position:absolute;left:911px;top:626px;width:1139px;height:1029px;border:8px solid #ff1100;border-radius:4px;"></div>
<svg style="position:absolute;left:793px;top:193px;" width="30" height="26" viewBox="0 0 30 26"><circle cx="12.5" cy="12" r="8.6" fill="#25324d"/><path d="M19.2 7.5 A8.6 8.6 0 1 0 16.5 19.7" fill="none" stroke="#548af7" stroke-width="1.5"/><circle cx="12.5" cy="12" r="4.8" fill="none" stroke="#548af7" stroke-width="1.5"/>
<line x1="23.1" y1="11" x2="23.1" y2="23.3" stroke="#dfe1e5" stroke-width="1.5"/><polyline points="19.2,19.6 23.1,23.5 27,19.6" fill="none" stroke="#dfe1e5" stroke-width="1.5"/></svg>
<svg style="position:absolute;left:866px;top:767px;" width="22" height="30" viewBox="0 0 22 30"><path d="M11 1.5 A8.5 8.5 0 0 1 16.2 16.8 L15.5 18.8 H6.5 L5.8 16.8 A8.5 8.5 0 0 1 11 1.5 Z" fill="#f2c55c"/><rect x="6.5" y="21.5" width="9" height="1.8" fill="#dfe1e5"/><rect x="7.2" y="25" width="7.6" height="1.8" fill="#dfe1e5"/></svg>
<div style="position:absolute;left:2443px;top:143px;width:369px;height:52px;background:#1e1f22;"></div>
<div style="position:absolute;left:2486.6px;top:160.36px;font-family:'Liberation Sans', sans-serif;font-size:23.2px;line-height:23.2px;color:#c9cbd0;white-space:pre;">Reader Mode</div>
<div style="position:absolute;left:2660px;top:151px;width:2px;height:41px;background:#43454a;"></div>
<svg style="position:absolute;left:2678px;top:160px;" width="24" height="24" viewBox="0 0 24 24"><circle cx="11.4" cy="11.6" r="9.6" fill="none" stroke="#e03b3b" stroke-width="1.6"/><polyline points="4.5,11.6 6,10 7.5,13 9,10 10.5,13 12,10 13.5,13 15,10 16.5,13 18,11.6" fill="none" stroke="#e03b3b" stroke-width="1.1"/></svg>
<div style="position:absolute;left:2708px;top:160.11px;font-family:'Liberation Sans', sans-serif;font-size:23.5px;line-height:23.5px;color:#8c8f95;white-space:pre;">21</div>
<div style="position:absolute;left:2751px;top:151px;width:2px;height:41px;background:#43454a;"></div>
<svg style="position:absolute;left:2765px;top:163px;" width="24" height="20" viewBox="0 0 24 20"><path d="M1.8 10 L4.8 7 L8.6 10.9 L19 0.8 L22 3.8 L8.6 17 Z" fill="none" stroke="#5fb865" stroke-width="1.5" stroke-linejoin="round"/></svg>
<div style="position:absolute;left:2793px;top:586px;width:18px;height:64px;background:#28292c;"></div>
<div style="position:absolute;left:2795px;top:588px;width:14px;height:60px;background:#464649;"></div>
<svg style="position:absolute;left:20px;top:20px;" width="30" height="30" viewBox="0 0 30 30"><defs><linearGradient id="pcg" x1="0" y1="0" x2="1" y2="1"><stop offset="0" stop-color="#21d789"/><stop offset="0.55" stop-color="#7bd94b"/><stop offset="1" stop-color="#fcf84a"/></linearGradient></defs>
<polygon points="3,4 13,1 27,3 29,14 28,27 14,29 2,26 1,13" fill="url(#pcg)"/><polygon points="22,2 29,6 28,14" fill="#07c3f2"/>
<rect x="6.5" y="6.5" width="17.5" height="17.5" fill="#000"/>
<text x="8" y="15" font-family="Liberation Sans" font-weight="700" font-size="8.5" fill="#fff">PC</text>
<rect x="8.5" y="20" width="6.5" height="1.8" fill="#fff"/></svg>
<svg style="position:absolute;left:89px;top:21px;" width="30" height="28" viewBox="0 0 30 28"><line x1="2" y1="2.1" x2="27.6" y2="2.1" stroke="#d5d7dc" stroke-width="2.8" stroke-linecap="round"/><line x1="2" y1="10.05" x2="27.6" y2="10.05" stroke="#d5d7dc" stroke-width="2.8" stroke-linecap="round"/><line x1="2" y1="18.0" x2="27.6" y2="18.0" stroke="#d5d7dc" stroke-width="2.8" stroke-linecap="round"/><line x1="2" y1="25.950000000000003" x2="27.6" y2="25.950000000000003" stroke="#d5d7dc" stroke-width="2.8" stroke-linecap="round"/></svg>
<div style="position:absolute;left:154px;top:17px;width:35px;height:35px;border-radius:7px;background:linear-gradient(180deg,#ad55de,#9b50d8);"></div>
<svg style="position:absolute;left:165px;top:26px;" width="13" height="18" viewBox="0 0 13 18"><path d="M1.5 1.2h3.6c4.2 0 6.2 2.6 6.2 7.8s-2 7.8-6.2 7.8H1.5z" fill="none" stroke="#fff" stroke-width="2.3"/></svg>
<div style="position:absolute;left:199px;top:23.26px;font-family:'Liberation Sans', sans-serif;font-size:24.5px;line-height:24.5px;color:#dfe1e5;white-space:pre;">drf</div>
<svg style="position:absolute;left:240px;top:31px;" width="14" height="8" viewBox="0 0 14 8"><polyline points="0,0 7.0,8 14,0" fill="none" stroke="#a8abb0" stroke-width="1.8" stroke-linecap="round" stroke-linejoin="round"/></svg>
<div style="position:absolute;left:284px;top:24.18px;font-family:'Liberation Sans', sans-serif;font-size:24px;line-height:24px;color:#dfe1e5;white-space:pre;">Version control</div>
<svg style="position:absolute;left:461px;top:30.5px;" width="14" height="8" viewBox="0 0 14 8"><polyline points="0,0 7.0,8 14,0" fill="none" stroke="#a8abb0" stroke-width="1.8" stroke-linecap="round" stroke-linejoin="round"/></svg>
<svg style="position:absolute;left:1966px;top:22px;" width="32" height="32" viewBox="0 0 32 32"><text x="0" y="25" font-family="Liberation Sans" font-weight="700" font-size="27" fill="#c9cbcf" letter-spacing="-1.5">dj</text></svg>
<div style="position:absolute;left:1986px;top:17px;width:13px;height:13px;border-radius:50%;background:#5fb865;border:0px solid #2b2d30;"></div>
<div style="position:absolute;left:2006px;top:23.68px;font-family:'Liberation Sans', sans-serif;font-size:24px;line-height:24px;color:#dfe1e5;white-space:pre;">drf</div>
<svg style="position:absolute;left:2048px;top:33px;" width="14" height="7.5" viewBox="0 0 14 7.5"><polyline points="0,0 7.0,7.5 14,0" fill="none" stroke="#a8abb0" stroke-width="1.8" stroke-linecap="round" stroke-linejoin="round"/></svg>
<div style="position:absolute;left:2086px;top:9px;width:52px;height:52px;border-radius:9px;background:#57965c;"></div>
<svg style="position:absolute;left:2096px;top:19px;" width="32" height="32" viewBox="0 0 32 32"><g fill="none" stroke="#e9ebee" stroke-width="2.3" stroke-linecap="round" stroke-linejoin="round"><path d="M19.25 8.24 A10 10 0 1 0 10.54 24.73"/>
<polyline points="21.3,2.9 21.3,10.6 13.9,10.6"/>
<path d="M16.6 17.4 L16.6 28 L26.4 22.6 Z"/></g></svg>
<svg style="position:absolute;left:2156px;top:21px;" width="32" height="28" viewBox="0 0 32 28"><g fill="none" stroke="#5fb865" stroke-width="2.2" stroke-linecap="round">
<ellipse cx="16" cy="15.5" rx="6" ry="8.5"/><path d="M12 6.5 A4 4 0 0 1 20 6.5"/>
<line x1="3" y1="14" x2="10" y2="14"/><line x1="22" y1="14" x2="29" y2="14"/>
<line x1="4" y1="5" x2="10" y2="9"/><line x1="28" y1="5" x2="22" y2="9"/>
<line x1="4" y1="24" x2="10" y2="20"/><line x1="28" y1="24" x2="22" y2="20"/></g></svg>
<div style="position:absolute;left:2205px;top:9px;width:52px;height:52px;border-radius:9px;background:#c94f4f;"></div>
<div style="position:absolute;left:2219px;top:23px;width:19.5px;height:19.5px;border-radius:3px;border:2.2px solid #eceef1;"></div>
<div style="position:absolute;left:2288.5px;top:23.3px;width:4.6px;height:4.6px;border-radius:50%;background:#dfe1e5;"></div>
<div style="position:absolute;left:2288.5px;top:32.7px;width:4.6px;height:4.6px;border-radius:50%;background:#dfe1e5;"></div>
<div style="position:absolute;left:2288.5px;top:42.0px;width:4.6px;height:4.6px;border-radius:50%;background:#dfe1e5;"></div>
<svg style="position:absolute;left:2369px;top:18px;" width="34" height="36" viewBox="0 0 34 36"><g fill="none" stroke="#ced0d6" stroke-width="2.2" stroke-linecap="round">
<circle cx="15" cy="9.5" r="6.5"/><path d="M2.5 30 C2.5 24 7 20.5 15 20.5 C17 20.5 18.5 20.7 20 21.2"/><line x1="2.5" y1="30" x2="14" y2="30"/>
<line x1="24.5" y1="19" x2="24.5" y2="33.5"/><line x1="17.5" y1="26.5" x2="31.5" y2="26.5"/></g></svg>
<svg style="position:absolute;left:2434px;top:18px;" width="38" height="34" viewBox="0 0 38 34"><g fill="none" stroke="#b0b3b8" stroke-width="2.6" stroke-linecap="round">
<line x1="2" y1="6" x2="20" y2="6"/><line x1="11" y1="2" x2="11" y2="6"/><path d="M5 7 C7 16 12 20 19 22"/><path d="M17 7 C15 15 10 21 2 25"/></g>
<path d="M15.5 32 L22.5 13.5 L26.5 13.5 L33.5 32 L29.3 32 L27.8 27.8 L21.2 27.8 L19.7 32 Z M22.3 24.5 L26.7 24.5 L24.5 18 Z" fill="#3592c4"/></svg>
<svg style="position:absolute;left:2506px;top:16px;" width="38" height="38" viewBox="0 0 38 38"><g fill="none" stroke="#ced0d6" stroke-width="2.3" stroke-linecap="round"><circle cx="17.5" cy="18" r="12.5"/><line x1="27" y1="27.5" x2="33" y2="34"/></g></svg>
<svg style="position:absolute;left:2576px;top:18px;" width="34" height="35" viewBox="0 0 34 35"><g fill="none" stroke="#ced0d6" stroke-width="2.2" stroke-linejoin="round"><path d="M14.3 3.5 h5.4 l1.3 4.2 a11 11 0 0 1 3.2 1.9 l4.3 -1 l2.7 4.7 l-3 3.2 a11 11 0 0 1 0 3.7 l3 3.2 l-2.7 4.7 l-4.3 -1 a11 11 0 0 1 -3.2 1.9 l-1.3 4.2 h-5.4 l-1.3 -4.2 a11 11 0 0 1 -3.2 -1.9 l-4.3 1 l-2.7 -4.7 l3 -3.2 a11 11 0 0 1 0 -3.7 l-3 -3.2 l2.7 -4.7 l4.3 1 a11 11 0 0 1 3.2 -1.9 z"/><circle cx="17" cy="17.5" r="4.8"/></g></svg>
<div style="position:absolute;left:2667px;top:33px;width:15px;height:1.5px;background:#dfe1e5;"></div>
<svg style="position:absolute;left:2746px;top:25px;" width="22" height="20" viewBox="0 0 22 20"><g fill="none" stroke="#dfe1e5" stroke-width="1.5"><rect x="2.5" y="6" width="11" height="11" rx="2.5"/><path d="M6 3.5 A2.5 2.5 0 0 1 8.5 1.5 H14.5 A3 3 0 0 1 17.5 4.5 V10.5 A2.5 2.5 0 0 1 15.5 13"/></g></svg>
<svg style="position:absolute;left:2829px;top:26px;" width="18" height="18" viewBox="0 0 18 18"><g stroke="#dfe1e5" stroke-width="1.6"><line x1="1.5" y1="1.5" x2="16.5" y2="16.5"/><line x1="16.5" y1="1.5" x2="1.5" y2="16.5"/></g></svg>
<div style="position:absolute;left:912px;top:71px;width:224px;height:71px;background:#3d3222;"></div>
<div style="position:absolute;left:1136px;top:71px;width:187px;height:71px;background:#2e2a24;"></div>
<div style="position:absolute;left:912px;top:137px;width:224px;height:6px;border-radius:3px;background:#3574f0;"></div>
<svg style="position:absolute;left:727px;top:95px" width="25" height="25" viewBox="0 0 24 24"><path fill="#3d7ab3" d="M11.8 1.5c-5.2 0-4.9 2.3-4.9 2.3v2.4h5v.7H5S1.7 6.5 1.7 11.9s2.9 5.2 2.9 5.2h1.7v-2.5s-.1-2.9 2.9-2.9h4.9s2.8 0 2.8-2.7V4.4s.4-2.9-5.1-2.9zM9 3.1c.5 0 .9.4.9.9s-.4.9-.9.9-.9-.4-.9-.9.4-.9.9-.9z"/><path fill="#f3c73e" transform="rotate(180 12.1 12.1)" d="M11.8 1.5c-5.2 0-4.9 2.3-4.9 2.3v2.4h5v.7H5S1.7 6.5 1.7 11.9s2.9 5.2 2.9 5.2h1.7v-2.5s-.1-2.9 2.9-2.9h4.9s2.8 0 2.8-2.7V4.4s.4-2.9-5.1-2.9zM9 3.1c.5 0 .9.4.9.9s-.4.9-.9.9-.9-.4-.9-.9.4-.9.9-.9z"/></svg>
<div style="position:absolute;left:761px;top:96.35px;font-family:'Liberation Sans', sans-serif;font-size:23.8px;line-height:23.8px;color:#dfe1e5;white-space:pre;">admin.py</div>
<svg style="position:absolute;left:935px;top:95px" width="25" height="25" viewBox="0 0 24 24"><path fill="#3d7ab3" d="M11.8 1.5c-5.2 0-4.9 2.3-4.9 2.3v2.4h5v.7H5S1.7 6.5 1.7 11.9s2.9 5.2 2.9 5.2h1.7v-2.5s-.1-2.9 2.9-2.9h4.9s2.8 0 2.8-2.7V4.4s.4-2.9-5.1-2.9zM9 3.1c.5 0 .9.4.9.9s-.4.9-.9.9-.9-.4-.9-.9.4-.9.9-.9z"/><path fill="#f3c73e" transform="rotate(180 12.1 12.1)" d="M11.8 1.5c-5.2 0-4.9 2.3-4.9 2.3v2.4h5v.7H5S1.7 6.5 1.7 11.9s2.9 5.2 2.9 5.2h1.7v-2.5s-.1-2.9 2.9-2.9h4.9s2.8 0 2.8-2.7V4.4s.4-2.9-5.1-2.9zM9 3.1c.5 0 .9.4.9.9s-.4.9-.9.9-.9-.4-.9-.9.4-.9.9-.9z"/></svg>
<div style="position:absolute;left:970px;top:96.35px;font-family:'Liberation Sans', sans-serif;font-size:23.8px;line-height:23.8px;color:#dfe1e5;white-space:pre;">options.py</div>
<svg style="position:absolute;left:1157px;top:95px" width="25" height="25" viewBox="0 0 24 24"><path fill="#3d7ab3" d="M11.8 1.5c-5.2 0-4.9 2.3-4.9 2.3v2.4h5v.7H5S1.7 6.5 1.7 11.9s2.9 5.2 2.9 5.2h1.7v-2.5s-.1-2.9 2.9-2.9h4.9s2.8 0 2.8-2.7V4.4s.4-2.9-5.1-2.9zM9 3.1c.5 0 .9.4.9.9s-.4.9-.9.9-.9-.4-.9-.9.4-.9.9-.9z"/><path fill="#f3c73e" transform="rotate(180 12.1 12.1)" d="M11.8 1.5c-5.2 0-4.9 2.3-4.9 2.3v2.4h5v.7H5S1.7 6.5 1.7 11.9s2.9 5.2 2.9 5.2h1.7v-2.5s-.1-2.9 2.9-2.9h4.9s2.8 0 2.8-2.7V4.4s.4-2.9-5.1-2.9zM9 3.1c.5 0 .9.4.9.9s-.4.9-.9.9-.9-.4-.9-.9.4-.9.9-.9z"/></svg>
<div style="position:absolute;left:1192px;top:96.35px;font-family:'Liberation Sans', sans-serif;font-size:23.8px;line-height:23.8px;color:#dfe1e5;white-space:pre;">sites.py</div>
<svg style="position:absolute;left:1344px;top:95px" width="25" height="25" viewBox="0 0 24 24"><path fill="#3d7ab3" d="M11.8 1.5c-5.2 0-4.9 2.3-4.9 2.3v2.4h5v.7H5S1.7 6.5 1.7 11.9s2.9 5.2 2.9 5.2h1.7v-2.5s-.1-2.9 2.9-2.9h4.9s2.8 0 2.8-2.7V4.4s.4-2.9-5.1-2.9zM9 3.1c.5 0 .9.4.9.9s-.4.9-.9.9-.9-.4-.9-.9.4-.9.9-.9z"/><path fill="#f3c73e" transform="rotate(180 12.1 12.1)" d="M11.8 1.5c-5.2 0-4.9 2.3-4.9 2.3v2.4h5v.7H5S1.7 6.5 1.7 11.9s2.9 5.2 2.9 5.2h1.7v-2.5s-.1-2.9 2.9-2.9h4.9s2.8 0 2.8-2.7V4.4s.4-2.9-5.1-2.9zM9 3.1c.5 0 .9.4.9.9s-.4.9-.9.9-.9-.4-.9-.9.4-.9.9-.9z"/></svg>
<div style="position:absolute;left:1379px;top:96.35px;font-family:'Liberation Sans', sans-serif;font-size:23.8px;line-height:23.8px;color:#dfe1e5;white-space:pre;">settings.py</div>
<svg style="position:absolute;left:1568px;top:95px" width="25" height="25" viewBox="0 0 24 24"><path fill="#3d7ab3" d="M11.8 1.5c-5.2 0-4.9 2.3-4.9 2.3v2.4h5v.7H5S1.7 6.5 1.7 11.9s2.9 5.2 2.9 5.2h1.7v-2.5s-.1-2.9 2.9-2.9h4.9s2.8 0 2.8-2.7V4.4s.4-2.9-5.1-2.9zM9 3.1c.5 0 .9.4.9.9s-.4.9-.9.9-.9-.4-.9-.9.4-.9.9-.9z"/><path fill="#f3c73e" transform="rotate(180 12.1 12.1)" d="M11.8 1.5c-5.2 0-4.9 2.3-4.9 2.3v2.4h5v.7H5S1.7 6.5 1.7 11.9s2.9 5.2 2.9 5.2h1.7v-2.5s-.1-2.9 2.9-2.9h4.9s2.8 0 2.8-2.7V4.4s.4-2.9-5.1-2.9zM9 3.1c.5 0 .9.4.9.9s-.4.9-.9.9-.9-.4-.9-.9.4-.9.9-.9z"/></svg>
<div style="position:absolute;left:1603px;top:96.35px;font-family:'Liberation Sans', sans-serif;font-size:23.8px;line-height:23.8px;color:#dfe1e5;white-space:pre;">urls.py</div>
<svg style="position:absolute;left:1749px;top:95px" width="25" height="25" viewBox="0 0 24 24"><path fill="#3d7ab3" d="M11.8 1.5c-5.2 0-4.9 2.3-4.9 2.3v2.4h5v.7H5S1.7 6.5 1.7 11.9s2.9 5.2 2.9 5.2h1.7v-2.5s-.1-2.9 2.9-2.9h4.9s2.8 0 2.8-2.7V4.4s.4-2.9-5.1-2.9zM9 3.1c.5 0 .9.4.9.9s-.4.9-.9.9-.9-.4-.9-.9.4-.9.9-.9z"/><path fill="#f3c73e" transform="rotate(180 12.1 12.1)" d="M11.8 1.5c-5.2 0-4.9 2.3-4.9 2.3v2.4h5v.7H5S1.7 6.5 1.7 11.9s2.9 5.2 2.9 5.2h1.7v-2.5s-.1-2.9 2.9-2.9h4.9s2.8 0 2.8-2.7V4.4s.4-2.9-5.1-2.9zM9 3.1c.5 0 .9.4.9.9s-.4.9-.9.9-.9-.4-.9-.9.4-.9.9-.9z"/></svg>
<div style="position:absolute;left:1783px;top:96.35px;font-family:'Liberation Sans', sans-serif;font-size:23.8px;line-height:23.8px;color:#dfe1e5;white-space:pre;">models.py</div>
<svg style="position:absolute;left:1101px;top:100px;" width="20" height="15" viewBox="0 0 20 15"><g stroke="#9a9da3" stroke-width="1.8"><line x1="2" y1="1" x2="17" y2="14"/><line x1="17" y1="1" x2="2" y2="14"/></g></svg>
<div style="position:absolute;left:2774.7px;top:94.7px;width:4.6px;height:4.6px;border-radius:50%;background:#ced0d6;"></div>
<div style="position:absolute;left:2774.7px;top:104.7px;width:4.6px;height:4.6px;border-radius:50%;background:#ced0d6;"></div>
<div style="position:absolute;left:2774.7px;top:114.7px;width:4.6px;height:4.6px;border-radius:50%;background:#ced0d6;"></div>
<div style="position:absolute;left:9px;top:80px;width:52px;height:52px;border-radius:9px;background:#43454a;"></div>
<svg style="position:absolute;left:18px;top:91px;" width="36" height="30" viewBox="0 0 36 30"><path d="M2.5 4.5 A2 2 0 0 1 4.5 2.5 H13 L16.5 6.5 H29.5 A2 2 0 0 1 31.5 8.5 V25.5 A2 2 0 0 1 29.5 27.5 H4.5 A2 2 0 0 1 2.5 25.5 Z" fill="none" stroke="#ced0d6" stroke-width="2.2" stroke-linejoin="round"/></svg>
<div style="position:absolute;left:14px;top:150px;width:42px;height:2px;background:#43454a;"></div>
<svg style="position:absolute;left:20px;top:181px;" width="32" height="32" viewBox="0 0 32 32"><g fill="none" stroke="#ced0d6" stroke-width="2"><rect x="2" y="2" width="11" height="11" rx="2.5"/><rect x="2" y="18" width="11" height="11" rx="2.5"/><rect x="17.5" y="18" width="11" height="11" rx="2.5"/></g></svg>
<svg style="position:absolute;left:20px;top:253px;" width="36" height="34" viewBox="0 0 36 34"><g fill="#ced0d6"><path d="M12.5 2 h4.3 v20 h-4.3 v-1.3 a6 6 0 0 1 -4 1.5 a6.8 6.8 0 0 1 -6.3 -7 a6.8 6.8 0 0 1 6.3 -7 a6 6 0 0 1 4 1.5 z M9.2 11.8 a3.2 3.2 0 0 0 0 6.6 a3.2 3.2 0 0 0 0 -6.6 z"/>
<rect x="20.5" y="2" width="4.5" height="4.5" rx="0.8"/><rect x="20.5" y="10" width="4.5" height="12" rx="0.8"/>
<rect x="26.5" y="15" width="6.5" height="7" rx="1.5"/><rect x="17" y="24" width="6.5" height="6.5" rx="1.5"/><rect x="26.5" y="24" width="6.5" height="6.5" rx="1.5"/></g></svg>
<div style="position:absolute;left:21.2px;top:333.59999999999997px;width:5.6px;height:5.6px;border-radius:50%;background:#ced0d6;"></div>
<div style="position:absolute;left:32.6px;top:333.59999999999997px;width:5.6px;height:5.6px;border-radius:50%;background:#ced0d6;"></div>
<div style="position:absolute;left:43.900000000000006px;top:333.59999999999997px;width:5.6px;height:5.6px;border-radius:50%;background:#ced0d6;"></div>
<svg style="position:absolute;left:19px;top:1065.5px;" width="36" height="36" viewBox="0 0 36 36"><g fill="none" stroke="#ced0d6" stroke-width="2" stroke-linecap="round"><ellipse cx="15" cy="7" rx="12.5" ry="5"/><path d="M2.5 7 V25 C2.5 28 8 30 15 30"/><path d="M27.5 7 V14"/><path d="M2.5 13 C2.5 16 8 18 15 18 C22 18 27.5 16 27.5 13"/><path d="M2.5 19 C2.5 22 8 24 15 24"/><polyline points="18,26 22,30 31,21"/></g></svg>
<svg style="position:absolute;left:19px;top:1135.5px;" width="34" height="34" viewBox="0 0 34 34"><g fill="none" stroke="#ced0d6" stroke-width="2.1" stroke-linejoin="round"><path d="M13.5 4 A12.5 12.5 0 1 0 27.5 18"/><path d="M17.5 2 V14 H29.5 A12 12 0 0 0 17.5 2 Z"/></g></svg>
<svg style="position:absolute;left:18px;top:1203px;" width="34" height="34" viewBox="0 0 34 34"><g fill="none" stroke="#ced0d6" stroke-width="2.1" stroke-linejoin="round"><path d="M11 6 Q11 2 15 2 H19 Q23 2 23 6 V11 H27.5 Q31.5 11 31.5 15.5 V19 Q31.5 23 27.5 23 H23 V28 Q23 32 19 32 H15 Q11 32 11 28 V23 H6.5 Q2.5 23 2.5 19 V15.5 Q2.5 11 6.5 11 H11 Z"/><path d="M11 23 V19 Q11 17 13 17 H21 Q23 17 23 15 V11"/><path d="M11 11 H17"/><path d="M17 23 H23"/></g><circle cx="15" cy="6.3" r="1.5" fill="#ced0d6"/><circle cx="19" cy="27.7" r="1.5" fill="#ced0d6"/></svg>
<svg style="position:absolute;left:17px;top:1273px;" width="38" height="38" viewBox="0 0 38 38"><circle cx="18.5" cy="18.5" r="16" fill="none" stroke="#db5c5c" stroke-width="2.2"/><path d="M6 18.5 Q7.8 15.5 9.6 18.5 T13.2 18.5 T16.8 18.5 T20.4 18.5 T24 18.5 T27.6 18.5 T31.2 18.5" fill="none" stroke="#db5c5c" stroke-width="1.5"/></svg>
<svg style="position:absolute;left:20px;top:1342px;" width="36" height="36" viewBox="0 0 36 36"><path d="M3.6 5.5 L3.6 32.5 L27.5 19.5 Z" fill="none" stroke="#ced0d6" stroke-width="2.2" stroke-linejoin="round"/></svg>
<div style="position:absolute;left:40.2px;top:1343.8px;width:12.5px;height:12.5px;border-radius:50%;background:#5fb865;"></div>
<svg style="position:absolute;left:19px;top:1414px;" width="34" height="36" viewBox="0 0 34 36"><g fill="none" stroke="#ced0d6" stroke-width="2.1" stroke-linejoin="round"><path d="M16 3 L30 10 L16 17 L2 10 Z"/><path d="M2 17 L16 24 L30 17"/><path d="M2 24 L16 31 L30 24"/></g></svg>
<svg style="position:absolute;left:17px;top:1484px;" width="36" height="34" viewBox="0 0 36 34"><g fill="none" stroke="#ced0d6" stroke-width="2.1" stroke-linejoin="round"><path d="M10 3 H24 L32 17 L24 31 H10 L2 17 Z"/><path d="M13 10 V24 L24 17 Z"/></g></svg>
<svg style="position:absolute;left:19px;top:1556px;" width="34" height="32" viewBox="0 0 34 32"><g fill="none" stroke="#ced0d6" stroke-width="2.1" stroke-linejoin="round" stroke-linecap="round"><rect x="2" y="2.5" width="29.5" height="26" rx="2"/><polyline points="8,9 14,13.5 8,18"/><line x1="16" y1="21" x2="24" y2="21"/></g></svg>
<svg style="position:absolute;left:19px;top:1624px;" width="34" height="34" viewBox="0 0 34 34"><circle cx="16.5" cy="16.5" r="14.5" fill="none" stroke="#ced0d6" stroke-width="2.1"/><line x1="16.5" y1="8" x2="16.5" y2="18" stroke="#ced0d6" stroke-width="2.6" stroke-linecap="round"/><circle cx="16.5" cy="23.5" r="1.8" fill="#ced0d6"/></svg>
<svg style="position:absolute;left:20px;top:1694px;" width="32" height="36" viewBox="0 0 32 36"><g fill="none" stroke="#ced0d6" stroke-width="2.1" stroke-linecap="round"><circle cx="6.5" cy="6.5" r="4.3"/><circle cx="22.5" cy="10" r="4.3"/><line x1="6.5" y1="11" x2="6.5" y2="32"/><path d="M6.5 25 H14 C19 25 22.5 21 22.5 15"/></g></svg>
<svg style="position:absolute;left:2831px;top:88px;" width="36" height="38" viewBox="0 0 36 38"><g fill="none" stroke="#ced0d6" stroke-width="2.1" stroke-linejoin="round"><path d="M3 28 H29 L26 23 V14 C26 8 22 4 16 4 C10 4 6 8 6 14 V23 Z"/><path d="M13 31.5 H19"/></g></svg>
<div style="position:absolute;left:2852.5px;top:89.5px;width:12.5px;height:12.5px;border-radius:50%;background:#e55b5b;"></div>
<svg style="position:absolute;left:2831px;top:159px;" width="34" height="36" viewBox="0 0 34 36"><g fill="none" stroke="#ced0d6" stroke-width="2.1"><ellipse cx="16.5" cy="7" rx="13.5" ry="5"/><path d="M3 7 V27.5 C3 30.5 9 32.5 16.5 32.5 C24 32.5 30 30.5 30 27.5 V7"/><path d="M3 14 C3 17 9 19 16.5 19 C24 19 30 17 30 14"/><path d="M3 21 C3 24 9 26 16.5 26 C24 26 30 24 30 21"/></g></svg>
<svg style="position:absolute;left:2831px;top:230px;" width="34" height="34" viewBox="0 0 34 34"><defs><clipPath id="xc"><circle cx="16" cy="16" r="14.8"/></clipPath></defs><g clip-path="url(#xc)"><rect x="0" y="0" width="34" height="34" fill="#ced0d6"/><rect x="0" y="11.5" width="34" height="2.4" fill="#2b2d30"/><rect x="0" y="18.3" width="34" height="2.4" fill="#2b2d30"/></g><path d="M9.5 6.5 H14 L16 10.5 L18 6.5 H22.5 L18.5 16 L22.5 25.5 H18 L16 21.5 L14 25.5 H9.5 L13.5 16 Z" fill="#ced0d6" stroke="#2b2d30" stroke-width="1.6" stroke-linejoin="round"/></svg>
<div style="position:absolute;left:2826px;top:290px;width:42px;height:2px;background:#43454a;"></div>
<svg style="position:absolute;left:2831px;top:317px;" width="34" height="40" viewBox="0 0 34 40"><g fill="none" stroke="#ced0d6" stroke-width="2.1" stroke-linejoin="round"><path d="M3 8 C3 5 5 3.5 8 3.5 H30 M3 8 V36 H30 V8 H8"/><line x1="8" y1="3.5" x2="30" y2="3.5"/></g><text x="16.5" y="31" text-anchor="middle" font-family="Liberation Sans" font-size="14" fill="#ced0d6">A</text></svg>
<div style="position:absolute;left:94px;top:96.95px;font-family:'Liberation Sans', sans-serif;font-size:22.5px;line-height:22.5px;color:#dfe1e5;white-space:pre;font-weight:700;">Project</div>
<svg style="position:absolute;left:182px;top:105px;" width="14" height="8" viewBox="0 0 14 8"><polyline points="0,0 7.0,8 14,0" fill="none" stroke="#a8abb0" stroke-width="1.8" stroke-linecap="round" stroke-linejoin="round"/></svg>
<div style="position:absolute;left:72px;top:143px;width:630px;height:1604px;overflow:hidden;">
<div style="position:absolute;left:21px;top:1386.5px;width:588px;height:41px;border-radius:7px;background:#43454a;"></div>
<svg style="position:absolute;left:358px;top:9px;" width="26" height="26" viewBox="0 0 26 26"><circle cx="13" cy="13" r="11.3" fill="#402527" stroke="#e06060" stroke-width="2"/><path d="M7 17.8 V9.2 M7 11.9 C7.3 10.1 8.5 9.2 9.9 9.2 C11.7 9.2 13 10.1 13 12.2 V17.8 M13 11.9 C13.3 10.1 14.5 9.2 16 9.2 C17.8 9.2 19 10.1 19 12.2 V17.8" fill="none" stroke="#e46262" stroke-width="1.6"/></svg>
<div style="position:absolute;left:390.7px;top:11.20px;font-family:'Liberation Sans', sans-serif;font-size:22.8px;line-height:22.8px;color:#dfe1e5;white-space:pre;">get_formset_kwargs(self, request, obj, *args)</div>
<svg style="position:absolute;left:358px;top:51px;" width="26" height="26" viewBox="0 0 26 26"><circle cx="13" cy="13" r="11.3" fill="#402527" stroke="#e06060" stroke-width="2"/><path d="M7 17.8 V9.2 M7 11.9 C7.3 10.1 8.5 9.2 9.9 9.2 C11.7 9.2 13 10.1 13 12.2 V17.8 M13 11.9 C13.3 10.1 14.5 9.2 16 9.2 C17.8 9.2 19 10.1 19 12.2 V17.8" fill="none" stroke="#e46262" stroke-width="1.6"/></svg>
<div style="position:absolute;left:390.7px;top:53.20px;font-family:'Liberation Sans', sans-serif;font-size:22.8px;line-height:22.8px;color:#dfe1e5;white-space:pre;">get_formsets_with_inlines(self, request, obj=None)</div>
<svg style="position:absolute;left:358px;top:93px;" width="26" height="26" viewBox="0 0 26 26"><circle cx="13" cy="13" r="11.3" fill="#402527" stroke="#e06060" stroke-width="2"/><path d="M7 17.8 V9.2 M7 11.9 C7.3 10.1 8.5 9.2 9.9 9.2 C11.7 9.2 13 10.1 13 12.2 V17.8 M13 11.9 C13.3 10.1 14.5 9.2 16 9.2 C17.8 9.2 19 10.1 19 12.2 V17.8" fill="none" stroke="#e46262" stroke-width="1.6"/></svg>
<div style="position:absolute;left:390.7px;top:95.20px;font-family:'Liberation Sans', sans-serif;font-size:22.8px;line-height:22.8px;color:#dfe1e5;white-space:pre;">get_inline_formsets(self, request, formsets)</div>
<svg style="position:absolute;left:358px;top:135px;" width="26" height="26" viewBox="0 0 26 26"><circle cx="13" cy="13" r="11.3" fill="#402527" stroke="#e06060" stroke-width="2"/><path d="M7 17.8 V9.2 M7 11.9 C7.3 10.1 8.5 9.2 9.9 9.2 C11.7 9.2 13 10.1 13 12.2 V17.8 M13 11.9 C13.3 10.1 14.5 9.2 16 9.2 C17.8 9.2 19 10.1 19 12.2 V17.8" fill="none" stroke="#e46262" stroke-width="1.6"/></svg>
<div style="position:absolute;left:390.7px;top:137.20px;font-family:'Liberation Sans', sans-serif;font-size:22.8px;line-height:22.8px;color:#dfe1e5;white-space:pre;">get_inline_instances(self, request, obj=None)</div>
<svg style="position:absolute;left:358px;top:177px;" width="26" height="26" viewBox="0 0 26 26"><circle cx="13" cy="13" r="11.3" fill="#402527" stroke="#e06060" stroke-width="2"/><path d="M7 17.8 V9.2 M7 11.9 C7.3 10.1 8.5 9.2 9.9 9.2 C11.7 9.2 13 10.1 13 12.2 V17.8 M13 11.9 C13.3 10.1 14.5 9.2 16 9.2 C17.8 9.2 19 10.1 19 12.2 V17.8" fill="none" stroke="#e46262" stroke-width="1.6"/></svg>
<div style="position:absolute;left:390.7px;top:179.20px;font-family:'Liberation Sans', sans-serif;font-size:22.8px;line-height:22.8px;color:#dfe1e5;white-space:pre;">get_list_display(self, request)</div>
<svg style="position:absolute;left:358px;top:219px;" width="26" height="26" viewBox="0 0 26 26"><circle cx="13" cy="13" r="11.3" fill="#402527" stroke="#e06060" stroke-width="2"/><path d="M7 17.8 V9.2 M7 11.9 C7.3 10.1 8.5 9.2 9.9 9.2 C11.7 9.2 13 10.1 13 12.2 V17.8 M13 11.9 C13.3 10.1 14.5 9.2 16 9.2 C17.8 9.2 19 10.1 19 12.2 V17.8" fill="none" stroke="#e46262" stroke-width="1.6"/></svg>
<div style="position:absolute;left:390.7px;top:221.20px;font-family:'Liberation Sans', sans-serif;font-size:22.8px;line-height:22.8px;color:#dfe1e5;white-space:pre;">get_list_display_links(self, request, list_display)</div>
<svg style="position:absolute;left:358px;top:261px;" width="26" height="26" viewBox="0 0 26 26"><circle cx="13" cy="13" r="11.3" fill="#402527" stroke="#e06060" stroke-width="2"/><path d="M7 17.8 V9.2 M7 11.9 C7.3 10.1 8.5 9.2 9.9 9.2 C11.7 9.2 13 10.1 13 12.2 V17.8 M13 11.9 C13.3 10.1 14.5 9.2 16 9.2 C17.8 9.2 19 10.1 19 12.2 V17.8" fill="none" stroke="#e46262" stroke-width="1.6"/></svg>
<div style="position:absolute;left:390.7px;top:263.20px;font-family:'Liberation Sans', sans-serif;font-size:22.8px;line-height:22.8px;color:#dfe1e5;white-space:pre;">get_list_filter(self, request)</div>
<svg style="position:absolute;left:358px;top:303px;" width="26" height="26" viewBox="0 0 26 26"><circle cx="13" cy="13" r="11.3" fill="#402527" stroke="#e06060" stroke-width="2"/><path d="M7 17.8 V9.2 M7 11.9 C7.3 10.1 8.5 9.2 9.9 9.2 C11.7 9.2 13 10.1 13 12.2 V17.8 M13 11.9 C13.3 10.1 14.5 9.2 16 9.2 C17.8 9.2 19 10.1 19 12.2 V17.8" fill="none" stroke="#e46262" stroke-width="1.6"/></svg>
<div style="position:absolute;left:390.7px;top:305.20px;font-family:'Liberation Sans', sans-serif;font-size:22.8px;line-height:22.8px;color:#dfe1e5;white-space:pre;">get_list_select_related(self, request)</div>
<svg style="position:absolute;left:358px;top:345px;" width="26" height="26" viewBox="0 0 26 26"><circle cx="13" cy="13" r="11.3" fill="#402527" stroke="#e06060" stroke-width="2"/><path d="M7 17.8 V9.2 M7 11.9 C7.3 10.1 8.5 9.2 9.9 9.2 C11.7 9.2 13 10.1 13 12.2 V17.8 M13 11.9 C13.3 10.1 14.5 9.2 16 9.2 C17.8 9.2 19 10.1 19 12.2 V17.8" fill="none" stroke="#e46262" stroke-width="1.6"/></svg>
<div style="position:absolute;left:390.7px;top:347.20px;font-family:'Liberation Sans', sans-serif;font-size:22.8px;line-height:22.8px;color:#dfe1e5;white-space:pre;">get_model_perms(self, request)</div>
<svg style="position:absolute;left:358px;top:387px;" width="26" height="26" viewBox="0 0 26 26"><circle cx="13" cy="13" r="11.3" fill="#402527" stroke="#e06060" stroke-width="2"/><path d="M7 17.8 V9.2 M7 11.9 C7.3 10.1 8.5 9.2 9.9 9.2 C11.7 9.2 13 10.1 13 12.2 V17.8 M13 11.9 C13.3 10.1 14.5 9.2 16 9.2 C17.8 9.2 19 10.1 19 12.2 V17.8" fill="none" stroke="#e46262" stroke-width="1.6"/></svg>
<div style="position:absolute;left:390.7px;top:389.20px;font-family:'Liberation Sans', sans-serif;font-size:22.8px;line-height:22.8px;color:#dfe1e5;white-space:pre;">get_object(self, request, object_id, from_field=None)</div>
<svg style="position:absolute;left:358px;top:429px;" width="26" height="26" viewBox="0 0 26 26"><circle cx="13" cy="13" r="11.3" fill="#402527" stroke="#e06060" stroke-width="2"/><path d="M7 17.8 V9.2 M7 11.9 C7.3 10.1 8.5 9.2 9.9 9.2 C11.7 9.2 13 10.1 13 12.2 V17.8 M13 11.9 C13.3 10.1 14.5 9.2 16 9.2 C17.8 9.2 19 10.1 19 12.2 V17.8" fill="none" stroke="#e46262" stroke-width="1.6"/></svg>
<div style="position:absolute;left:390.7px;top:431.20px;font-family:'Liberation Sans', sans-serif;font-size:22.8px;line-height:22.8px;color:#dfe1e5;white-space:pre;">get_paginator(self, request, queryset, per_page)</div>
<svg style="position:absolute;left:358px;top:471px;" width="26" height="26" viewBox="0 0 26 26"><circle cx="13" cy="13" r="11.3" fill="#402527" stroke="#e06060" stroke-width="2"/><path d="M7 17.8 V9.2 M7 11.9 C7.3 10.1 8.5 9.2 9.9 9.2 C11.7 9.2 13 10.1 13 12.2 V17.8 M13 11.9 C13.3 10.1 14.5 9.2 16 9.2 C17.8 9.2 19 10.1 19 12.2 V17.8" fill="none" stroke="#e46262" stroke-width="1.6"/></svg>
<div style="position:absolute;left:390.7px;top:473.20px;font-family:'Liberation Sans', sans-serif;font-size:22.8px;line-height:22.8px;color:#dfe1e5;white-space:pre;">get_preserved_filters(self, request)</div>
<svg style="position:absolute;left:358px;top:513px;" width="26" height="26" viewBox="0 0 26 26"><circle cx="13" cy="13" r="11.3" fill="#402527" stroke="#e06060" stroke-width="2"/><path d="M7 17.8 V9.2 M7 11.9 C7.3 10.1 8.5 9.2 9.9 9.2 C11.7 9.2 13 10.1 13 12.2 V17.8 M13 11.9 C13.3 10.1 14.5 9.2 16 9.2 C17.8 9.2 19 10.1 19 12.2 V17.8" fill="none" stroke="#e46262" stroke-width="1.6"/></svg>
<div style="position:absolute;left:390.7px;top:515.20px;font-family:'Liberation Sans', sans-serif;font-size:22.8px;line-height:22.8px;color:#dfe1e5;white-space:pre;">get_search_fields(self, request)</div>
<svg style="position:absolute;left:358px;top:555px;" width="26" height="26" viewBox="0 0 26 26"><circle cx="13" cy="13" r="11.3" fill="#402527" stroke="#e06060" stroke-width="2"/><path d="M7 17.8 V9.2 M7 11.9 C7.3 10.1 8.5 9.2 9.9 9.2 C11.7 9.2 13 10.1 13 12.2 V17.8 M13 11.9 C13.3 10.1 14.5 9.2 16 9.2 C17.8 9.2 19 10.1 19 12.2 V17.8" fill="none" stroke="#e46262" stroke-width="1.6"/></svg>
<div style="position:absolute;left:390.7px;top:557.20px;font-family:'Liberation Sans', sans-serif;font-size:22.8px;line-height:22.8px;color:#dfe1e5;white-space:pre;">get_search_results(self, request, queryset, search_term)</div>
<svg style="position:absolute;left:358px;top:597px;" width="26" height="26" viewBox="0 0 26 26"><circle cx="13" cy="13" r="11.3" fill="#402527" stroke="#e06060" stroke-width="2"/><path d="M7 17.8 V9.2 M7 11.9 C7.3 10.1 8.5 9.2 9.9 9.2 C11.7 9.2 13 10.1 13 12.2 V17.8 M13 11.9 C13.3 10.1 14.5 9.2 16 9.2 C17.8 9.2 19 10.1 19 12.2 V17.8" fill="none" stroke="#e46262" stroke-width="1.6"/></svg>
<div style="position:absolute;left:390.7px;top:599.20px;font-family:'Liberation Sans', sans-serif;font-size:22.8px;line-height:22.8px;color:#dfe1e5;white-space:pre;">get_urls(self)</div>
<svg style="position:absolute;left:358px;top:639px;" width="26" height="26" viewBox="0 0 26 26"><circle cx="13" cy="13" r="11.3" fill="#402527" stroke="#e06060" stroke-width="2"/><path d="M7 17.8 V9.2 M7 11.9 C7.3 10.1 8.5 9.2 9.9 9.2 C11.7 9.2 13 10.1 13 12.2 V17.8 M13 11.9 C13.3 10.1 14.5 9.2 16 9.2 C17.8 9.2 19 10.1 19 12.2 V17.8" fill="none" stroke="#e46262" stroke-width="1.6"/></svg>
<div style="position:absolute;left:390.7px;top:641.20px;font-family:'Liberation Sans', sans-serif;font-size:22.8px;line-height:22.8px;color:#dfe1e5;white-space:pre;">history_view(self, request, object_id, extra_context=None)</div>
<svg style="position:absolute;left:358px;top:681px;" width="26" height="26" viewBox="0 0 26 26"><circle cx="13" cy="13" r="11.3" fill="#402527" stroke="#e06060" stroke-width="2"/><path d="M7 17.8 V9.2 M7 11.9 C7.3 10.1 8.5 9.2 9.9 9.2 C11.7 9.2 13 10.1 13 12.2 V17.8 M13 11.9 C13.3 10.1 14.5 9.2 16 9.2 C17.8 9.2 19 10.1 19 12.2 V17.8" fill="none" stroke="#e46262" stroke-width="1.6"/></svg>
<div style="position:absolute;left:390.7px;top:683.20px;font-family:'Liberation Sans', sans-serif;font-size:22.8px;line-height:22.8px;color:#dfe1e5;white-space:pre;">log_addition(self, request, obj, message)</div>
<svg style="position:absolute;left:358px;top:723px;" width="26" height="26" viewBox="0 0 26 26"><circle cx="13" cy="13" r="11.3" fill="#402527" stroke="#e06060" stroke-width="2"/><path d="M7 17.8 V9.2 M7 11.9 C7.3 10.1 8.5 9.2 9.9 9.2 C11.7 9.2 13 10.1 13 12.2 V17.8 M13 11.9 C13.3 10.1 14.5 9.2 16 9.2 C17.8 9.2 19 10.1 19 12.2 V17.8" fill="none" stroke="#e46262" stroke-width="1.6"/></svg>
<div style="position:absolute;left:390.7px;top:725.20px;font-family:'Liberation Sans', sans-serif;font-size:22.8px;line-height:22.8px;color:#dfe1e5;white-space:pre;">log_change(self, request, obj, message)</div>
<svg style="position:absolute;left:358px;top:765px;" width="26" height="26" viewBox="0 0 26 26"><circle cx="13" cy="13" r="11.3" fill="#402527" stroke="#e06060" stroke-width="2"/><path d="M7 17.8 V9.2 M7 11.9 C7.3 10.1 8.5 9.2 9.9 9.2 C11.7 9.2 13 10.1 13 12.2 V17.8 M13 11.9 C13.3 10.1 14.5 9.2 16 9.2 C17.8 9.2 19 10.1 19 12.2 V17.8" fill="none" stroke="#e46262" stroke-width="1.6"/></svg>
<div style="position:absolute;left:390.7px;top:767.20px;font-family:'Liberation Sans', sans-serif;font-size:22.8px;line-height:22.8px;color:#dfe1e5;white-space:pre;">log_deletion(self, request, obj, object_repr)</div>
<svg style="position:absolute;left:358px;top:804.5px;" width="30" height="28" viewBox="0 0 30 28"><circle cx="13" cy="15.5" r="12.3" fill="#8b73a8"/><path d="M15 0 H30 V12 H21 V9 H15 Z" fill="#3d3125"/><path d="M9.6 25 V11.8 M9.6 15.2 C10 12.6 11.8 11.8 13.6 11.8 C16.4 11.8 17.6 14 17.6 16.5 C17.6 19 16.4 21.2 13.6 21.2 C11.8 21.2 10 20.3 9.6 17.8" fill="none" stroke="#3b3450" stroke-width="1.4"/><path d="M16.5 5.5 H22.5" stroke="#a9b7bd" stroke-width="2"/><path d="M21.5 1.5 L27 5.5 L21.5 9.5 Z" fill="#a9b7bd"/></svg>
<div style="position:absolute;left:390.7px;top:809.20px;font-family:'Liberation Sans', sans-serif;font-size:22.8px;line-height:22.8px;color:#dfe1e5;white-space:pre;">media(self)</div>
<svg style="position:absolute;left:358px;top:849px;" width="26" height="26" viewBox="0 0 26 26"><circle cx="13" cy="13" r="11.3" fill="#402527" stroke="#e06060" stroke-width="2"/><path d="M7 17.8 V9.2 M7 11.9 C7.3 10.1 8.5 9.2 9.9 9.2 C11.7 9.2 13 10.1 13 12.2 V17.8 M13 11.9 C13.3 10.1 14.5 9.2 16 9.2 C17.8 9.2 19 10.1 19 12.2 V17.8" fill="none" stroke="#e46262" stroke-width="1.6"/></svg>
<div style="position:absolute;left:390.7px;top:851.20px;font-family:'Liberation Sans', sans-serif;font-size:22.8px;line-height:22.8px;color:#dfe1e5;white-space:pre;">message_user(self, request, message)</div>
<svg style="position:absolute;left:358px;top:891px;" width="26" height="26" viewBox="0 0 26 26"><circle cx="13" cy="13" r="11.3" fill="#402527" stroke="#e06060" stroke-width="2"/><path d="M7 17.8 V9.2 M7 11.9 C7.3 10.1 8.5 9.2 9.9 9.2 C11.7 9.2 13 10.1 13 12.2 V17.8 M13 11.9 C13.3 10.1 14.5 9.2 16 9.2 C17.8 9.2 19 10.1 19 12.2 V17.8" fill="none" stroke="#e46262" stroke-width="1.6"/></svg>
<div style="position:absolute;left:390.7px;top:893.20px;font-family:'Liberation Sans', sans-serif;font-size:22.8px;line-height:22.8px;color:#dfe1e5;white-space:pre;">render_change_form(self, request, context)</div>
<svg style="position:absolute;left:358px;top:933px;" width="26" height="26" viewBox="0 0 26 26"><circle cx="13" cy="13" r="11.3" fill="#402527" stroke="#e06060" stroke-width="2"/><path d="M7 17.8 V9.2 M7 11.9 C7.3 10.1 8.5 9.2 9.9 9.2 C11.7 9.2 13 10.1 13 12.2 V17.8 M13 11.9 C13.3 10.1 14.5 9.2 16 9.2 C17.8 9.2 19 10.1 19 12.2 V17.8" fill="none" stroke="#e46262" stroke-width="1.6"/></svg>
<div style="position:absolute;left:390.7px;top:935.20px;font-family:'Liberation Sans', sans-serif;font-size:22.8px;line-height:22.8px;color:#dfe1e5;white-space:pre;">render_delete_form(self, request, context)</div>
<svg style="position:absolute;left:358px;top:975px;" width="26" height="26" viewBox="0 0 26 26"><circle cx="13" cy="13" r="11.3" fill="#402527" stroke="#e06060" stroke-width="2"/><path d="M7 17.8 V9.2 M7 11.9 C7.3 10.1 8.5 9.2 9.9 9.2 C11.7 9.2 13 10.1 13 12.2 V17.8 M13 11.9 C13.3 10.1 14.5 9.2 16 9.2 C17.8 9.2 19 10.1 19 12.2 V17.8" fill="none" stroke="#e46262" stroke-width="1.6"/></svg>
<div style="position:absolute;left:390.7px;top:977.20px;font-family:'Liberation Sans', sans-serif;font-size:22.8px;line-height:22.8px;color:#dfe1e5;white-space:pre;">response_action(self, request, queryset)</div>
<svg style="position:absolute;left:358px;top:1017px;" width="26" height="26" viewBox="0 0 26 26"><circle cx="13" cy="13" r="11.3" fill="#402527" stroke="#e06060" stroke-width="2"/><path d="M7 17.8 V9.2 M7 11.9 C7.3 10.1 8.5 9.2 9.9 9.2 C11.7 9.2 13 10.1 13 12.2 V17.8 M13 11.9 C13.3 10.1 14.5 9.2 16 9.2 C17.8 9.2 19 10.1 19 12.2 V17.8" fill="none" stroke="#e46262" stroke-width="1.6"/></svg>
<div style="position:absolute;left:390.7px;top:1019.20px;font-family:'Liberation Sans', sans-serif;font-size:22.8px;line-height:22.8px;color:#dfe1e5;white-space:pre;">response_add(self, request, obj)</div>
<svg style="position:absolute;left:358px;top:1059px;" width="26" height="26" viewBox="0 0 26 26"><circle cx="13" cy="13" r="11.3" fill="#402527" stroke="#e06060" stroke-width="2"/><path d="M7 17.8 V9.2 M7 11.9 C7.3 10.1 8.5 9.2 9.9 9.2 C11.7 9.2 13 10.1 13 12.2 V17.8 M13 11.9 C13.3 10.1 14.5 9.2 16 9.2 C17.8 9.2 19 10.1 19 12.2 V17.8" fill="none" stroke="#e46262" stroke-width="1.6"/></svg>
<div style="position:absolute;left:390.7px;top:1061.20px;font-family:'Liberation Sans', sans-serif;font-size:22.8px;line-height:22.8px;color:#dfe1e5;white-space:pre;">response_change(self, request, obj)</div>
<svg style="position:absolute;left:358px;top:1101px;" width="26" height="26" viewBox="0 0 26 26"><circle cx="13" cy="13" r="11.3" fill="#402527" stroke="#e06060" stroke-width="2"/><path d="M7 17.8 V9.2 M7 11.9 C7.3 10.1 8.5 9.2 9.9 9.2 C11.7 9.2 13 10.1 13 12.2 V17.8 M13 11.9 C13.3 10.1 14.5 9.2 16 9.2 C17.8 9.2 19 10.1 19 12.2 V17.8" fill="none" stroke="#e46262" stroke-width="1.6"/></svg>
<div style="position:absolute;left:390.7px;top:1103.20px;font-family:'Liberation Sans', sans-serif;font-size:22.8px;line-height:22.8px;color:#dfe1e5;white-space:pre;">response_delete(self, request, obj_display)</div>
<svg style="position:absolute;left:358px;top:1143px;" width="26" height="26" viewBox="0 0 26 26"><circle cx="13" cy="13" r="11.3" fill="#402527" stroke="#e06060" stroke-width="2"/><path d="M7 17.8 V9.2 M7 11.9 C7.3 10.1 8.5 9.2 9.9 9.2 C11.7 9.2 13 10.1 13 12.2 V17.8 M13 11.9 C13.3 10.1 14.5 9.2 16 9.2 C17.8 9.2 19 10.1 19 12.2 V17.8" fill="none" stroke="#e46262" stroke-width="1.6"/></svg>
<div style="position:absolute;left:390.7px;top:1145.20px;font-family:'Liberation Sans', sans-serif;font-size:22.8px;line-height:22.8px;color:#dfe1e5;white-space:pre;">response_post_save_add(self, request, obj)</div>
<svg style="position:absolute;left:358px;top:1185px;" width="26" height="26" viewBox="0 0 26 26"><circle cx="13" cy="13" r="11.3" fill="#402527" stroke="#e06060" stroke-width="2"/><path d="M7 17.8 V9.2 M7 11.9 C7.3 10.1 8.5 9.2 9.9 9.2 C11.7 9.2 13 10.1 13 12.2 V17.8 M13 11.9 C13.3 10.1 14.5 9.2 16 9.2 C17.8 9.2 19 10.1 19 12.2 V17.8" fill="none" stroke="#e46262" stroke-width="1.6"/></svg>
<div style="position:absolute;left:390.7px;top:1187.20px;font-family:'Liberation Sans', sans-serif;font-size:22.8px;line-height:22.8px;color:#dfe1e5;white-space:pre;">response_post_save_change(self, request, obj)</div>
<svg style="position:absolute;left:358px;top:1227px;" width="26" height="26" viewBox="0 0 26 26"><circle cx="13" cy="13" r="11.3" fill="#402527" stroke="#e06060" stroke-width="2"/><path d="M7 17.8 V9.2 M7 11.9 C7.3 10.1 8.5 9.2 9.9 9.2 C11.7 9.2 13 10.1 13 12.2 V17.8 M13 11.9 C13.3 10.1 14.5 9.2 16 9.2 C17.8 9.2 19 10.1 19 12.2 V17.8" fill="none" stroke="#e46262" stroke-width="1.6"/></svg>
<div style="position:absolute;left:390.7px;top:1229.20px;font-family:'Liberation Sans', sans-serif;font-size:22.8px;line-height:22.8px;color:#dfe1e5;white-space:pre;">save_form(self, request, form, change)</div>
<svg style="position:absolute;left:358px;top:1269px;" width="26" height="26" viewBox="0 0 26 26"><circle cx="13" cy="13" r="11.3" fill="#402527" stroke="#e06060" stroke-width="2"/><path d="M7 17.8 V9.2 M7 11.9 C7.3 10.1 8.5 9.2 9.9 9.2 C11.7 9.2 13 10.1 13 12.2 V17.8 M13 11.9 C13.3 10.1 14.5 9.2 16 9.2 C17.8 9.2 19 10.1 19 12.2 V17.8" fill="none" stroke="#e46262" stroke-width="1.6"/></svg>
<div style="position:absolute;left:390.7px;top:1271.20px;font-family:'Liberation Sans', sans-serif;font-size:22.8px;line-height:22.8px;color:#dfe1e5;white-space:pre;">save_formset(self, request, form, formset)</div>
<svg style="position:absolute;left:358px;top:1311px;" width="26" height="26" viewBox="0 0 26 26"><circle cx="13" cy="13" r="11.3" fill="#402527" stroke="#e06060" stroke-width="2"/><path d="M7 17.8 V9.2 M7 11.9 C7.3 10.1 8.5 9.2 9.9 9.2 C11.7 9.2 13 10.1 13 12.2 V17.8 M13 11.9 C13.3 10.1 14.5 9.2 16 9.2 C17.8 9.2 19 10.1 19 12.2 V17.8" fill="none" stroke="#e46262" stroke-width="1.6"/></svg>
<div style="position:absolute;left:390.7px;top:1313.20px;font-family:'Liberation Sans', sans-serif;font-size:22.8px;line-height:22.8px;color:#dfe1e5;white-space:pre;">save_model(self, request, obj, form, change)</div>
<svg style="position:absolute;left:358px;top:1353px;" width="26" height="26" viewBox="0 0 26 26"><circle cx="13" cy="13" r="11.3" fill="#402527" stroke="#e06060" stroke-width="2"/><path d="M7 17.8 V9.2 M7 11.9 C7.3 10.1 8.5 9.2 9.9 9.2 C11.7 9.2 13 10.1 13 12.2 V17.8 M13 11.9 C13.3 10.1 14.5 9.2 16 9.2 C17.8 9.2 19 10.1 19 12.2 V17.8" fill="none" stroke="#e46262" stroke-width="1.6"/></svg>
<div style="position:absolute;left:390.7px;top:1355.20px;font-family:'Liberation Sans', sans-serif;font-size:22.8px;line-height:22.8px;color:#dfe1e5;white-space:pre;">save_related(self, request, form, formsets)</div>
<svg style="position:absolute;left:358px;top:1392.5px;" width="30" height="28" viewBox="0 0 30 28"><circle cx="13" cy="15.5" r="12.3" fill="#8b73a8"/><path d="M15 0 H30 V12 H21 V9 H15 Z" fill="#43454a"/><path d="M9.6 25 V11.8 M9.6 15.2 C10 12.6 11.8 11.8 13.6 11.8 C16.4 11.8 17.6 14 17.6 16.5 C17.6 19 16.4 21.2 13.6 21.2 C11.8 21.2 10 20.3 9.6 17.8" fill="none" stroke="#3b3450" stroke-width="1.4"/><path d="M16.5 5.5 H22.5" stroke="#a9b7bd" stroke-width="2"/><path d="M21.5 1.5 L27 5.5 L21.5 9.5 Z" fill="#a9b7bd"/></svg>
<div style="position:absolute;left:390.7px;top:1397.20px;font-family:'Liberation Sans', sans-serif;font-size:22.8px;line-height:22.8px;color:#dfe1e5;white-space:pre;">urls(self)</div>
<svg style="position:absolute;left:325px;top:1437px;" width="26" height="26" viewBox="0 0 26 26"><circle cx="13" cy="13" r="11.3" fill="#25324d" stroke="#548af7" stroke-width="1.6"/><path d="M17.2 9.6 A5.6 5.6 0 1 0 17.2 16.4" fill="none" stroke="#548af7" stroke-width="1.5"/></svg>
<div style="position:absolute;left:357.8px;top:1439.20px;font-family:'Liberation Sans', sans-serif;font-size:22.8px;line-height:22.8px;color:#dfe1e5;white-space:pre;">ShowFacets(enum.Enum)</div>
<svg style="position:absolute;left:325px;top:1479px;" width="26" height="26" viewBox="0 0 26 26"><circle cx="13" cy="13" r="11.3" fill="#25324d" stroke="#548af7" stroke-width="1.6"/><path d="M17.2 9.6 A5.6 5.6 0 1 0 17.2 16.4" fill="none" stroke="#548af7" stroke-width="1.5"/></svg>
<div style="position:absolute;left:357.8px;top:1481.20px;font-family:'Liberation Sans', sans-serif;font-size:22.8px;line-height:22.8px;color:#dfe1e5;white-space:pre;">StackedInline(InlineModelAdmin)</div>
<svg style="position:absolute;left:325px;top:1521px;" width="26" height="26" viewBox="0 0 26 26"><circle cx="13" cy="13" r="11.3" fill="#25324d" stroke="#548af7" stroke-width="1.6"/><path d="M17.2 9.6 A5.6 5.6 0 1 0 17.2 16.4" fill="none" stroke="#548af7" stroke-width="1.5"/></svg>
<div style="position:absolute;left:357.8px;top:1523.20px;font-family:'Liberation Sans', sans-serif;font-size:22.8px;line-height:22.8px;color:#dfe1e5;white-space:pre;">TabularInline(InlineModelAdmin)</div>
<svg style="position:absolute;left:261px;top:1573px;" width="14" height="8" viewBox="0 0 14 8"><polyline points="0,0 7.0,8 14,0" fill="none" stroke="#a8abb0" stroke-width="1.8" stroke-linecap="round" stroke-linejoin="round"/></svg>
<svg style="position:absolute;left:291px;top:1563px" width="26" height="26" viewBox="0 0 24 24"><path fill="#3d7ab3" d="M11.8 1.5c-5.2 0-4.9 2.3-4.9 2.3v2.4h5v.7H5S1.7 6.5 1.7 11.9s2.9 5.2 2.9 5.2h1.7v-2.5s-.1-2.9 2.9-2.9h4.9s2.8 0 2.8-2.7V4.4s.4-2.9-5.1-2.9zM9 3.1c.5 0 .9.4.9.9s-.4.9-.9.9-.9-.4-.9-.9.4-.9.9-.9z"/><path fill="#f3c73e" transform="rotate(180 12.1 12.1)" d="M11.8 1.5c-5.2 0-4.9 2.3-4.9 2.3v2.4h5v.7H5S1.7 6.5 1.7 11.9s2.9 5.2 2.9 5.2h1.7v-2.5s-.1-2.9 2.9-2.9h4.9s2.8 0 2.8-2.7V4.4s.4-2.9-5.1-2.9zM9 3.1c.5 0 .9.4.9.9s-.4.9-.9.9-.9-.4-.9-.9.4-.9.9-.9z"/></svg>
<div style="position:absolute;left:324px;top:1565.20px;font-family:'Liberation Sans', sans-serif;font-size:22.8px;line-height:22.8px;color:#dfe1e5;white-space:pre;">sites.py</div>
<div style="position:absolute;left:614px;top:558px;width:14px;height:305px;background:rgba(255,255,255,0.145);"></div>
<div style="position:absolute;left:0px;top:1588px;width:266px;height:14.5px;background:rgba(255,255,255,0.15);"></div>
</div>
<div style="position:absolute;left:0px;top:1747px;width:2880px;height:52px;background:#2b2d30;"></div>
<div style="position:absolute;left:0px;top:1746px;width:2880px;height:1px;background:#1e1f22;"></div>
<div style="position:absolute;left:25px;top:1765px;width:11px;height:11px;border-radius:2.5px;border:2px solid #548af7;"></div>
<div style="position:absolute;left:46px;top:1763.03px;font-family:'Liberation Sans', sans-serif;font-size:23px;line-height:23px;color:#a9acb2;white-space:pre;">drf</div>
<div style="position:absolute;left:120px;top:1763.03px;font-family:'Liberation Sans', sans-serif;font-size:23px;line-height:23px;color:#a9acb2;white-space:pre;">.venv</div>
<div style="position:absolute;left:217.7px;top:1763.03px;font-family:'Liberation Sans', sans-serif;font-size:23px;line-height:23px;color:#a9acb2;white-space:pre;">Lib</div>
<div style="position:absolute;left:291px;top:1763.03px;font-family:'Liberation Sans', sans-serif;font-size:23px;line-height:23px;color:#a9acb2;white-space:pre;">site-packages</div>
<div style="position:absolute;left:476px;top:1763.03px;font-family:'Liberation Sans', sans-serif;font-size:23px;line-height:23px;color:#a9acb2;white-space:pre;">django</div>
<div style="position:absolute;left:593.6px;top:1763.03px;font-family:'Liberation Sans', sans-serif;font-size:23px;line-height:23px;color:#a9acb2;white-space:pre;">contrib</div>
<div style="position:absolute;left:711px;top:1763.03px;font-family:'Liberation Sans', sans-serif;font-size:23px;line-height:23px;color:#a9acb2;white-space:pre;">admin</div>
<svg style="position:absolute;left:93px;top:1766px;" width="7" height="13" viewBox="0 0 7 13"><polyline points="0,0 7,6.5 0,13" fill="none" stroke="#9a9da3" stroke-width="1.7" stroke-linecap="round" stroke-linejoin="round"/></svg>
<svg style="position:absolute;left:192px;top:1766px;" width="7" height="13" viewBox="0 0 7 13"><polyline points="0,0 7,6.5 0,13" fill="none" stroke="#9a9da3" stroke-width="1.7" stroke-linecap="round" stroke-linejoin="round"/></svg>
<svg style="position:absolute;left:265.6px;top:1766px;" width="7" height="13" viewBox="0 0 7 13"><polyline points="0,0 7,6.5 0,13" fill="none" stroke="#9a9da3" stroke-width="1.7" stroke-linecap="round" stroke-linejoin="round"/></svg>
<svg style="position:absolute;left:450px;top:1766px;" width="7" height="13" viewBox="0 0 7 13"><polyline points="0,0 7,6.5 0,13" fill="none" stroke="#9a9da3" stroke-width="1.7" stroke-linecap="round" stroke-linejoin="round"/></svg>
<svg style="position:absolute;left:568px;top:1766px;" width="7" height="13" viewBox="0 0 7 13"><polyline points="0,0 7,6.5 0,13" fill="none" stroke="#9a9da3" stroke-width="1.7" stroke-linecap="round" stroke-linejoin="round"/></svg>
<svg style="position:absolute;left:685.7px;top:1766px;" width="7" height="13" viewBox="0 0 7 13"><polyline points="0,0 7,6.5 0,13" fill="none" stroke="#9a9da3" stroke-width="1.7" stroke-linecap="round" stroke-linejoin="round"/></svg>
<svg style="position:absolute;left:795px;top:1766px;" width="7" height="13" viewBox="0 0 7 13"><polyline points="0,0 7,6.5 0,13" fill="none" stroke="#9a9da3" stroke-width="1.7" stroke-linecap="round" stroke-linejoin="round"/></svg>
<svg style="position:absolute;left:822px;top:1760px" width="25" height="25" viewBox="0 0 24 24"><path fill="#3d7ab3" d="M11.8 1.5c-5.2 0-4.9 2.3-4.9 2.3v2.4h5v.7H5S1.7 6.5 1.7 11.9s2.9 5.2 2.9 5.2h1.7v-2.5s-.1-2.9 2.9-2.9h4.9s2.8 0 2.8-2.7V4.4s.4-2.9-5.1-2.9zM9 3.1c.5 0 .9.4.9.9s-.4.9-.9.9-.9-.4-.9-.9.4-.9.9-.9z"/><path fill="#f3c73e" transform="rotate(180 12.1 12.1)" d="M11.8 1.5c-5.2 0-4.9 2.3-4.9 2.3v2.4h5v.7H5S1.7 6.5 1.7 11.9s2.9 5.2 2.9 5.2h1.7v-2.5s-.1-2.9 2.9-2.9h4.9s2.8 0 2.8-2.7V4.4s.4-2.9-5.1-2.9zM9 3.1c.5 0 .9.4.9.9s-.4.9-.9.9-.9-.4-.9-.9.4-.9.9-.9z"/></svg>
<div style="position:absolute;left:856px;top:1763.03px;font-family:'Liberation Sans', sans-serif;font-size:23px;line-height:23px;color:#a9acb2;white-space:pre;">options.py</div>
<div style="position:absolute;left:2027.6px;top:1763.54px;font-family:'Liberation Sans', sans-serif;font-size:22.4px;line-height:22.4px;color:#b7babf;white-space:pre;">726:18</div>
<svg style="position:absolute;left:2127px;top:1762px;" width="26" height="26" viewBox="0 0 26 26"><rect x="0" y="0" width="12" height="12" fill="#f25022"/><rect x="13" y="0" width="12" height="12" fill="#7fba00"/><rect x="0" y="13" width="12" height="12" fill="#00a4ef"/><rect x="13" y="13" width="12" height="12" fill="#ffb900"/></svg>
<div style="position:absolute;left:2182px;top:1763.54px;font-family:'Liberation Sans', sans-serif;font-size:22.4px;line-height:22.4px;color:#b7babf;white-space:pre;">LF</div>
<div style="position:absolute;left:2231.7px;top:1763.54px;font-family:'Liberation Sans', sans-serif;font-size:22.4px;line-height:22.4px;color:#b7babf;white-space:pre;">UTF-8</div>
<div style="position:absolute;left:2324px;top:1763.54px;font-family:'Liberation Sans', sans-serif;font-size:22.4px;line-height:22.4px;color:#b7babf;white-space:pre;">4 spaces</div>
<div style="position:absolute;left:2442px;top:1762.44px;font-family:'Liberation Sans', sans-serif;font-size:23.7px;line-height:23.7px;color:#b7babf;white-space:pre;">Python 3.11 (drf)</div>
<svg style="position:absolute;left:2650px;top:1763px;" width="26" height="24" viewBox="0 0 26 24"><g fill="none" stroke="#ced0d6" stroke-width="1.9"><rect x="1.5" y="9.5" width="16" height="13" rx="2.5"/><path d="M12.5 9.5 V6 A4.5 4.5 0 0 1 21.5 6 V8.5"/></g><line x1="9.5" y1="13.5" x2="9.5" y2="17.5" stroke="#ced0d6" stroke-width="1.9"/></svg>
<div style="position:absolute;left:2688px;top:1748px;width:63px;height:51px;background:#28375a;"></div>
<div style="position:absolute;left:2751px;top:1748px;width:38px;height:51px;background:#1e1f22;"></div>
<div style="position:absolute;left:2697px;top:1762.94px;font-family:'Liberation Sans', sans-serif;font-size:23.7px;line-height:23.7px;color:#b7babf;white-space:pre;">1238 of 3400M</div></body></html>
